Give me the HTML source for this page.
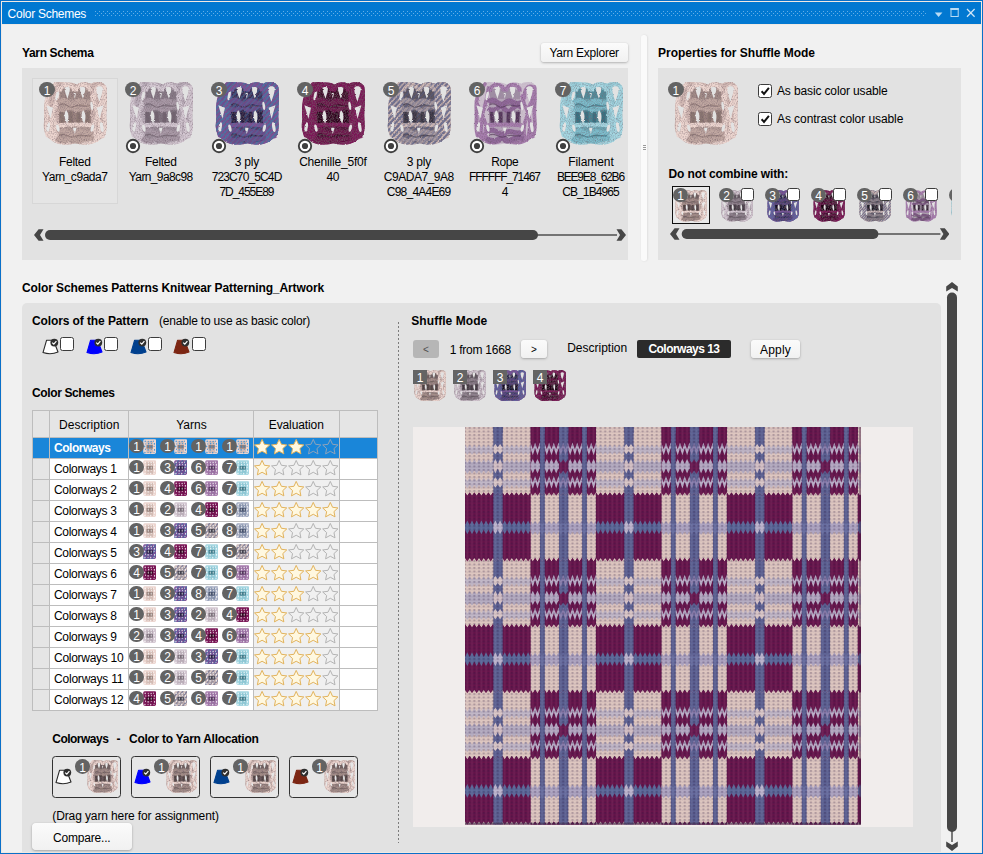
<!DOCTYPE html>
<html><head><meta charset="utf-8"><title>Color Schemes</title>
<style>
html,body{margin:0;padding:0;}
body{width:983px;height:854px;overflow:hidden;position:relative;background:#f1f1f1;
 font-family:"Liberation Sans",sans-serif;font-size:12px;}
.b{position:absolute;display:block;}
.t{position:absolute;white-space:nowrap;line-height:16px;height:16px;}
</style></head><body>
<div class="b " style="left:0px;top:0px;width:983px;height:854px;background:#0a70c9;"></div>
<div class="b " style="left:1px;top:1px;width:981px;height:852px;background:#f1e9e2;"></div>
<div class="b " style="left:2px;top:2px;width:979px;height:22px;background:#0178d1;"></div>
<div class="b " style="left:2px;top:24px;width:979px;height:1px;background:#f0e9e3;"></div>
<div class="b " style="left:2px;top:25px;width:979px;height:827px;background:#f1f1f1;"></div>
<span class="t" style="left:7.60px;top:6.00px;font-size:12px;color:#fff;letter-spacing:-0.272px;">Color Schemes</span>
<svg class="b" style="left:94px;top:11px" width="834" height="5"><defs><pattern id="grip" width="4" height="4" patternUnits="userSpaceOnUse"><rect x="1" y="0" width="1" height="1" fill="#63aee6"/><rect x="3" y="2" width="1" height="1" fill="#63aee6"/></pattern></defs><rect width="832" height="5" fill="url(#grip)"/></svg>
<svg class="b" style="left:934px;top:11px" width="10" height="8"><path d="M0.8 1.6h7.6l-3.8 4.4z" fill="#b9dbf4"/></svg>
<svg class="b" style="left:950px;top:7px" width="10" height="11"><rect x="1" y="1.5" width="7.2" height="8" fill="none" stroke="#b9dbf4" stroke-width="1"/><rect x="0.5" y="1" width="8.2" height="2" fill="#b9dbf4"/></svg>
<svg class="b" style="left:966px;top:8px" width="10" height="10"><path d="M1 1l7.6 7.8M8.6 1L1 8.8" stroke="#cfe5f7" stroke-width="1.25" fill="none"/></svg>
<svg width="0" height="0" style="position:absolute">
<defs>
<filter id="fz" x="-6%" y="-6%" width="112%" height="112%">
  <feTurbulence type="fractalNoise" baseFrequency="0.7" numOctaves="2" seed="4" result="n"/>
  <feDisplacementMap in="SourceGraphic" in2="n" scale="2.2" xChannelSelector="R" yChannelSelector="G"/>
  <feGaussianBlur stdDeviation="0.3" result="g"/>
  <feTurbulence type="fractalNoise" baseFrequency="0.85" numOctaves="2" seed="9" result="sp"/>
  <feColorMatrix in="sp" type="matrix" values="0 0 0 0 0.16  0 0 0 0 0.10  0 0 0 0 0.14  1.5 0 0 0 -0.62" result="spk"/>
  <feComposite in="spk" in2="g" operator="atop"/>
</filter>
<clipPath id="ysil"><path id="ysilp" d="M2 20 C4 10 8 4 12 0.5 C16 -1 21 1 25 0.5 C29 0 32 2 34 2.5 C37 0 44 -0.5 48 2 C52 -1 62 -1 63.5 6 C65 18 62.5 30 63.5 42 C64 50 62 55 57 58 C50 64 40 64 33 61.5 C25 64 14 64 8 58 C2 55 0 48 1 40 C2 32 0 26 2 20 Z"/></clipPath>
<mask id="yholes" maskUnits="userSpaceOnUse" x="-4" y="-4" width="72" height="72"><rect x="-4" y="-4" width="72" height="72" fill="#fff"/><g fill="#000">
   <path d="M21.6 6.5 C22.5 4.6 26 4.6 26.9 6.5 C27 10 25.4 13 24.5 17 C23.3 13 21.6 10 21.6 6.5Z"/>
   <path d="M37 6.5 C37.9 4.6 41.4 4.6 42.3 6.5 C42.4 10 40.8 13 39.9 17 C38.7 13 37 10 37 6.5Z"/>
   <path d="M30.6 11 L33 11 L31.8 17Z"/>
   <path d="M53.2 6 C54.2 3.8 58.8 3.8 59.8 6 C59.8 11 57.8 15 56.4 20 C54.8 15 53.2 11 53.2 6Z"/>
   <path d="M23.2 28.5 C26.2 32 25.8 37 24.2 42 C21.4 37 20.6 32 23.2 28.5Z"/>
   <path d="M40.2 28.5 C43.2 32 42.8 37 41.2 42 C38.4 37 37.6 32 40.2 28.5Z"/>
   <path d="M30 46 L33.6 46 L31.8 52.5Z"/>
   <path d="M3.4 23.5 L10 26 L7.4 37Z"/>
   <ellipse cx="5.2" cy="45.5" rx="1.6" ry="5" transform="rotate(10 5.2 45.5)"/>
   <ellipse cx="14.4" cy="14" rx="1.4" ry="4.6" transform="rotate(12 14.6 13)"/>
   <ellipse cx="14.8" cy="46.5" rx="1.5" ry="3.8" transform="rotate(-12 14.8 46)"/>
   <path d="M53.6 26 L60.4 23.5 L56.6 37Z"/>
   <ellipse cx="58.8" cy="45.5" rx="1.6" ry="5" transform="rotate(-10 58.8 45.5)"/>
   <ellipse cx="49" cy="24" rx="1.3" ry="4.2" transform="rotate(-8 48.8 25.5)"/>
   <ellipse cx="49.4" cy="46.5" rx="1.5" ry="3.8" transform="rotate(12 49.4 46)"/>
  </g></mask>
<symbol id="yarn" viewBox="0 0 64 64">
 <g filter="url(#fz)"><g mask="url(#yholes)">
  <use href="#ysilp" fill="var(--l)" style="opacity:var(--bo,1)"/>
  <use href="#ysilp" fill="var(--m)" style="opacity:calc(var(--bo,1)*.62)"/>
  <!-- light strands at the sides -->
  <g stroke="var(--l)" stroke-width="3.7" fill="none" stroke-linecap="round">
   <path d="M12 2 C6 8 2.5 16 3.5 26 C4.5 36 2.5 46 4.5 54"/>
   <path d="M4 22 C8 30 13 38 13 48 C13 54 12 57 14 59"/>
   <path d="M15.5 6 C14.5 16 12 24 9.5 32 C7.5 40 8 50 10.5 57"/>
   <path d="M61.5 5 C62.5 16 60.5 26 61.5 36 C62.5 46 61.5 52 59.5 55"/>
   <path d="M60.5 22 C56 30 51 38 51 48 C51 54 52 57 50 59"/>
   <path d="M49.5 14 C49.5 20 53 26 55.5 32 C57.5 40 57 50 54.5 57"/>
   <path d="M51.5 16 C50 2 63.5 0.5 61 12 C60 18 58 22 56 25"/>
   <path d="M6 52 C9 60 18 63 26 60 M38 60 C46 63 55 60 58 52"/>
  </g>
  <path d="M-70.0 70 L0.0 -6 M-64.8 70 L5.2 -6 M-59.6 70 L10.4 -6 M-54.4 70 L15.6 -6 M-49.2 70 L20.8 -6 M-44.0 70 L26.0 -6 M-38.8 70 L31.2 -6 M-33.6 70 L36.4 -6 M-28.4 70 L41.6 -6 M-23.2 70 L46.8 -6 M-18.0 70 L52.0 -6 M-12.8 70 L57.2 -6 M-7.6 70 L62.4 -6 M-2.4 70 L67.6 -6 M2.8 70 L72.8 -6 M8.0 70 L78.0 -6 M13.2 70 L83.2 -6 M18.4 70 L88.4 -6 M23.6 70 L93.6 -6 M28.8 70 L98.8 -6 M34.0 70 L104.0 -6 M39.2 70 L109.2 -6 M44.4 70 L114.4 -6 M49.6 70 L119.6 -6 M54.8 70 L124.8 -6 M60.0 70 L130.0 -6 M65.2 70 L135.2 -6 M70.4 70 L140.4 -6 " stroke="var(--a)" stroke-width="2.1" fill="none" clip-path="url(#ysil)" opacity=".8"/>
  <!-- centre dark block -->
  <path d="M16.5 9 C20 6 28 6 32 8 C36 6 44 6 47.5 9 L48 59 C42 62 22 62 16 59 Z" fill="var(--d)" style="opacity:calc(var(--co,1)*.42)"/>
  <rect x="16" y="28.5" width="32" height="13.5" fill="var(--d)" style="opacity:calc(var(--co,1)*.6)"/>
  <rect x="17" y="6.5" width="30" height="10.5" fill="var(--d)" style="opacity:calc(var(--co,1)*.45)"/>
  <!-- top loop arcs (light) -->
  <path d="M17 9.5 C17 0.5 31 0.5 31 9.5 M33 9.5 C33 0.5 47 0.5 47 9.5" stroke="var(--l)" stroke-width="4" fill="none"/>
  <!-- wavy band 1 -->
  <path d="M15 20.5 Q19.5 16.5 24 20.5 T32 21 T40 20.5 T49 20.5" stroke="var(--m)" stroke-width="5.4" fill="none"/>
  <path d="M15 26.5 Q19.5 30 24 26.5 T32 27.5 T40 26.5 T49 26.5" stroke="var(--m)" stroke-width="4.8" fill="none"/>
  <path d="M16 23.4 Q20 20.6 24 23.6 T32 24.4 T40 23.6 T48 23.4" stroke="var(--d)" stroke-width="1.2" fill="none" opacity=".65"/>
  <!-- light band -->
  <path d="M14 44 Q32 41.5 50 44" stroke="var(--l)" stroke-width="4.2" fill="none"/>
  <!-- wavy band 2 -->
  <path d="M14 50.5 Q19 46.8 24 50.5 T32 51.5 T40 50.5 T50 50.5" stroke="var(--m)" stroke-width="5" fill="none"/>
  <path d="M13 57 Q19 61 25 58 T32 58 T39 58 T51 57" stroke="var(--m)" stroke-width="5.4" fill="none"/>
  <path d="M16 54 Q20 51.4 24 54 T32 55 T40 54 T48 54" stroke="var(--d)" stroke-width="1.2" fill="none" opacity=".65"/>
  <path d="M-70.0 70 L0.0 -6 M-64.8 70 L5.2 -6 M-59.6 70 L10.4 -6 M-54.4 70 L15.6 -6 M-49.2 70 L20.8 -6 M-44.0 70 L26.0 -6 M-38.8 70 L31.2 -6 M-33.6 70 L36.4 -6 M-28.4 70 L41.6 -6 M-23.2 70 L46.8 -6 M-18.0 70 L52.0 -6 M-12.8 70 L57.2 -6 M-7.6 70 L62.4 -6 M-2.4 70 L67.6 -6 M2.8 70 L72.8 -6 M8.0 70 L78.0 -6 M13.2 70 L83.2 -6 M18.4 70 L88.4 -6 M23.6 70 L93.6 -6 M28.8 70 L98.8 -6 M34.0 70 L104.0 -6 M39.2 70 L109.2 -6 M44.4 70 L114.4 -6 M49.6 70 L119.6 -6 M54.8 70 L124.8 -6 M60.0 70 L130.0 -6 M65.2 70 L135.2 -6 M70.4 70 L140.4 -6 " stroke="var(--a)" stroke-width="1.6" fill="none" clip-path="url(#ysil)" opacity=".45"/>
  <!-- dark legs accents -->
  <path d="M18.5 30 L19.3 41 M27.6 30 L28 41 M35.6 30 L35.2 41 M45 30 L44.4 41" stroke="var(--d)" stroke-width="3.6" fill="none" opacity=".9"/>
 </g></g>
</symbol>
<mask id="minih" maskUnits="userSpaceOnUse" x="0" y="0" width="64" height="64"><rect width="64" height="64" fill="#fff"/><g fill="#000"><ellipse cx="10.4" cy="9.8" rx="2.6" ry="3.6"/><ellipse cx="24.9" cy="10.4" rx="2.0" ry="2.8"/><ellipse cx="38.8" cy="10.4" rx="2.6" ry="3.6"/><ellipse cx="50.5" cy="8.9" rx="2.0" ry="2.8"/><ellipse cx="13.4" cy="20.5" rx="2.0" ry="2.8"/><ellipse cx="27.3" cy="18.8" rx="2.6" ry="3.6"/><ellipse cx="39.9" cy="19.2" rx="2.0" ry="2.8"/><ellipse cx="54.1" cy="20.2" rx="2.6" ry="3.6"/><ellipse cx="8.4" cy="31.1" rx="2.6" ry="3.6"/><ellipse cx="25" cy="32" rx="2" ry="4.6"/><ellipse cx="39" cy="32" rx="2" ry="4.6"/><ellipse cx="53.0" cy="30.8" rx="2.0" ry="2.8"/><ellipse cx="12.4" cy="42.8" rx="2.0" ry="2.8"/><ellipse cx="24.4" cy="45.2" rx="2.6" ry="3.6"/><ellipse cx="39.1" cy="43.1" rx="2.0" ry="2.8"/><ellipse cx="55.5" cy="45.2" rx="2.6" ry="3.6"/><ellipse cx="9.3" cy="56.5" rx="2.6" ry="3.6"/><ellipse cx="24.1" cy="55.6" rx="2.0" ry="2.8"/><ellipse cx="37.1" cy="56.4" rx="2.6" ry="3.6"/><ellipse cx="52.6" cy="56.5" rx="2.0" ry="2.8"/></g></mask>
<symbol id="ymini" viewBox="0 0 64 64">
 <g mask="url(#minih)">
  <path d="M8 1 H58 Q63 1 63 6 V52 Q63 63 50 63 H14 Q1 63 1 52 V8 Q1 1 8 1Z" fill="var(--l)"/>
  <path d="M0 64 L64 0 M-20 64 L44 0 M20 64 L84 0 M-40 64 L24 0 M40 64 L104 0" stroke="var(--a)" stroke-width="7" opacity=".7"/>
  <rect x="16" y="8" width="32" height="50" fill="var(--m)" opacity=".55"/>
  <rect x="17" y="25" width="30" height="15" fill="var(--d)" opacity=".85"/>
 </g>
</symbol>
</defs></svg>
<span class="t" style="left:22.00px;top:45.30px;font-size:12px;color:#000;font-weight:bold;letter-spacing:-0.352px;">Yarn Schema</span>
<div class="b " style="left:540.5px;top:43px;width:87.5px;height:18.5px;background:#f7f7f7;border-radius:3px;box-shadow:0 1px 2.5px rgba(0,0,0,.26),0 0 1px rgba(0,0,0,.14);background:linear-gradient(#fbfbfb,#f1f1f1);"></div>
<span class="t" style="left:549.39px;top:45.35px;font-size:12px;color:#000;letter-spacing:-0.229px;">Yarn Explorer</span>
<div class="b " style="left:22px;top:68px;width:606px;height:191.5px;background:#e2e2e2;"></div>
<div class="b " style="left:32px;top:78px;width:86px;height:125.6px;background:#e5e5e5;border:1px solid #d7d7d7;box-sizing:border-box;"></div>
<svg class="b" style="left:43px;top:82px;--l:#ecd5cf;--m:#c0a7a1;--d:#8a7570;--a:none;--bo:1;--co:1;" width="64" height="63.5" viewBox="0 0 64 64" preserveAspectRatio="none"><use href="#yarn"/></svg>
<div class="b " style="left:39.3px;top:82.0px;width:15.4px;height:15.4px;background:#636363;border-radius:50%;"></div>
<span class="t" style="left:43.66px;top:82.90px;font-size:12px;color:#fff;">1</span>
<span class="t" style="left:59.10px;top:153.60px;font-size:12px;color:#000;letter-spacing:-0.309px;">Felted</span>
<span class="t" style="left:42.02px;top:168.60px;font-size:12px;color:#000;letter-spacing:-0.455px;">Yarn_c9ada7</span>
<svg class="b" style="left:129px;top:82px;--l:#d3c7d1;--m:#a899a6;--d:#70646f;--a:none;--bo:1;--co:1;" width="64" height="63.5" viewBox="0 0 64 64" preserveAspectRatio="none"><use href="#yarn"/></svg>
<div class="b " style="left:125.3px;top:82.0px;width:15.4px;height:15.4px;background:#636363;border-radius:50%;"></div>
<span class="t" style="left:129.66px;top:82.90px;font-size:12px;color:#fff;">2</span>
<svg class="b" style="left:125px;top:137.8px" width="16" height="16"><circle cx="8" cy="8" r="6.2" fill="#fff" stroke="#404040" stroke-width="1.9"/><circle cx="8" cy="8" r="3.1" fill="#404040"/></svg>
<span class="t" style="left:145.10px;top:153.60px;font-size:12px;color:#000;letter-spacing:-0.309px;">Felted</span>
<span class="t" style="left:128.84px;top:168.60px;font-size:12px;color:#000;letter-spacing:-0.618px;">Yarn_9a8c98</span>
<svg class="b" style="left:215px;top:82px;--l:#7d4f96;--m:#684a8c;--d:#221a3c;--a:#4a74a6;--bo:1;--co:1;" width="64" height="63.5" viewBox="0 0 64 64" preserveAspectRatio="none"><use href="#yarn"/></svg>
<div class="b " style="left:211.3px;top:82.0px;width:15.4px;height:15.4px;background:#636363;border-radius:50%;"></div>
<span class="t" style="left:215.66px;top:82.90px;font-size:12px;color:#fff;">3</span>
<svg class="b" style="left:211px;top:137.8px" width="16" height="16"><circle cx="8" cy="8" r="6.2" fill="#fff" stroke="#404040" stroke-width="1.9"/><circle cx="8" cy="8" r="3.1" fill="#404040"/></svg>
<span class="t" style="left:234.71px;top:153.60px;font-size:12px;color:#000;letter-spacing:-0.190px;">3 ply</span>
<span class="t" style="left:211.66px;top:168.60px;font-size:12px;color:#000;letter-spacing:-0.872px;">723C70_5C4D</span>
<span class="t" style="left:219.48px;top:183.60px;font-size:12px;color:#000;letter-spacing:-1.043px;">7D_455E89</span>
<svg class="b" style="left:301px;top:82px;--l:#7c1858;--m:#6c124c;--d:#2c041c;--a:none;--bo:1;--co:1;" width="64" height="63.5" viewBox="0 0 64 64" preserveAspectRatio="none"><use href="#yarn"/></svg>
<div class="b " style="left:297.3px;top:82.0px;width:15.4px;height:15.4px;background:#636363;border-radius:50%;"></div>
<span class="t" style="left:301.66px;top:82.90px;font-size:12px;color:#fff;">4</span>
<svg class="b" style="left:297px;top:137.8px" width="16" height="16"><circle cx="8" cy="8" r="6.2" fill="#fff" stroke="#404040" stroke-width="1.9"/><circle cx="8" cy="8" r="3.1" fill="#404040"/></svg>
<span class="t" style="left:299.15px;top:153.60px;font-size:12px;color:#000;letter-spacing:-0.196px;">Chenille_5f0f</span>
<span class="t" style="left:326.46px;top:168.60px;font-size:12px;color:#000;letter-spacing:-0.274px;">40</span>
<svg class="b" style="left:387px;top:82px;--l:#d0bcb8;--m:#a99ca2;--d:#33333f;--a:#676c90;--bo:1;--co:1;" width="64" height="63.5" viewBox="0 0 64 64" preserveAspectRatio="none"><use href="#yarn"/></svg>
<div class="b " style="left:383.3px;top:82.0px;width:15.4px;height:15.4px;background:#636363;border-radius:50%;"></div>
<span class="t" style="left:387.66px;top:82.90px;font-size:12px;color:#fff;">5</span>
<svg class="b" style="left:383px;top:137.8px" width="16" height="16"><circle cx="8" cy="8" r="6.2" fill="#fff" stroke="#404040" stroke-width="1.9"/><circle cx="8" cy="8" r="3.1" fill="#404040"/></svg>
<span class="t" style="left:406.71px;top:153.60px;font-size:12px;color:#000;letter-spacing:-0.190px;">3 ply</span>
<span class="t" style="left:383.85px;top:168.60px;font-size:12px;color:#000;letter-spacing:-0.491px;">C9ADA7_9A8</span>
<span class="t" style="left:386.86px;top:183.60px;font-size:12px;color:#000;letter-spacing:-0.789px;">C98_4A4E69</span>
<svg class="b" style="left:473px;top:82px;--l:#a67dad;--m:#90689a;--d:#4a2c54;--a:none;--bo:.22;--co:.45;" width="64" height="63.5" viewBox="0 0 64 64" preserveAspectRatio="none"><use href="#yarn"/></svg>
<div class="b " style="left:469.3px;top:82.0px;width:15.4px;height:15.4px;background:#636363;border-radius:50%;"></div>
<span class="t" style="left:473.66px;top:82.90px;font-size:12px;color:#fff;">6</span>
<svg class="b" style="left:469px;top:137.8px" width="16" height="16"><circle cx="8" cy="8" r="6.2" fill="#fff" stroke="#404040" stroke-width="1.9"/><circle cx="8" cy="8" r="3.1" fill="#404040"/></svg>
<span class="t" style="left:491.29px;top:153.60px;font-size:12px;color:#000;letter-spacing:-0.422px;">Rope</span>
<span class="t" style="left:468.96px;top:168.60px;font-size:12px;color:#000;letter-spacing:-1.085px;">FFFFFF_71467</span>
<span class="t" style="left:501.66px;top:183.60px;font-size:12px;color:#000;">4</span>
<svg class="b" style="left:559px;top:82px;--l:#a4d6e1;--m:#7cbccb;--d:#336f7e;--a:none;--bo:.8;--co:1;" width="64" height="63.5" viewBox="0 0 64 64" preserveAspectRatio="none"><use href="#yarn"/></svg>
<div class="b " style="left:555.3px;top:82.0px;width:15.4px;height:15.4px;background:#636363;border-radius:50%;"></div>
<span class="t" style="left:559.66px;top:82.90px;font-size:12px;color:#fff;">7</span>
<svg class="b" style="left:555px;top:137.8px" width="16" height="16"><circle cx="8" cy="8" r="6.2" fill="#fff" stroke="#404040" stroke-width="1.9"/><circle cx="8" cy="8" r="3.1" fill="#404040"/></svg>
<span class="t" style="left:568.17px;top:153.60px;font-size:12px;color:#000;letter-spacing:-0.052px;">Filament</span>
<span class="t" style="left:556.91px;top:168.60px;font-size:12px;color:#000;letter-spacing:-1.188px;">BEE9E8_62B6</span>
<span class="t" style="left:562.20px;top:183.60px;font-size:12px;color:#000;letter-spacing:-0.891px;">CB_1B4965</span>
<svg class="b" style="left:34px;top:228px" width="592" height="14"><path d="M9.5 1.2 L4.6 1.2 L0 7 L4.6 12.8 L9.5 12.8 L6 7 Z" fill="#464646"/><rect x="11" y="2" width="493" height="10" rx="5" fill="#464646"/><rect x="502" y="6.3" width="81" height="1.4" fill="#464646"/><path d="M582.5 1.2 l4.9 0 l4.6 5.8 l-4.6 5.8 l-4.9 0 l3.5 -5.8 Z" fill="#464646"/></svg>
<div class="b " style="left:641.4px;top:35px;width:6px;height:225.5px;background:#fafafa;box-shadow:0.5px 0 2px rgba(0,0,0,.10);border-radius:2.5px;"></div>
<div class="b " style="left:643.2px;top:145.2px;width:2.6px;height:1px;background:#9a9a9a;"></div>
<div class="b " style="left:643.2px;top:147.2px;width:2.6px;height:1px;background:#9a9a9a;"></div>
<div class="b " style="left:643.2px;top:149.2px;width:2.6px;height:1px;background:#9a9a9a;"></div>
<span class="t" style="left:658.00px;top:45.30px;font-size:12px;color:#000;font-weight:bold;letter-spacing:-0.013px;">Properties for Shuffle Mode</span>
<div class="b " style="left:658px;top:68px;width:303px;height:191.5px;background:#e2e2e2;"></div>
<svg class="b" style="left:674px;top:82px;--l:#ecd5cf;--m:#c0a7a1;--d:#8a7570;--a:none;--bo:1;--co:1;" width="64" height="63.5" viewBox="0 0 64 64" preserveAspectRatio="none"><use href="#yarn"/></svg>
<div class="b " style="left:668.1999999999999px;top:82.0px;width:15.4px;height:15.4px;background:#636363;border-radius:50%;"></div>
<span class="t" style="left:672.56px;top:82.90px;font-size:12px;color:#fff;">1</span>
<div class="b " style="left:758px;top:84px;width:12px;height:12px;background:#fff;border:1px solid #3c3c3c;border-radius:2.5px;"><svg width="14" height="14" viewBox="0 0 14 14" style="position:absolute;left:-1px;top:-1px"><path d="M3.6 7.3 L6 9.9 L10.9 3.9" fill="none" stroke="#111" stroke-width="2" stroke-linejoin="miter"/></svg></div>
<div class="b " style="left:758px;top:112px;width:12px;height:12px;background:#fff;border:1px solid #3c3c3c;border-radius:2.5px;"><svg width="14" height="14" viewBox="0 0 14 14" style="position:absolute;left:-1px;top:-1px"><path d="M3.6 7.3 L6 9.9 L10.9 3.9" fill="none" stroke="#111" stroke-width="2" stroke-linejoin="miter"/></svg></div>
<span class="t" style="left:777.00px;top:82.90px;font-size:12px;color:#000;letter-spacing:-0.133px;">As basic color usable</span>
<span class="t" style="left:777.00px;top:110.90px;font-size:12px;color:#000;letter-spacing:-0.073px;">As contrast color usable</span>
<span class="t" style="left:668.50px;top:165.90px;font-size:12px;color:#000;font-weight:bold;letter-spacing:-0.114px;">Do not combine with:</span>
<div class="b " style="left:672px;top:186px;width:38px;height:38px;background:#e9e9e9;border:1px solid #111;box-sizing:border-box;"></div>
<div class="b" style="left:670px;top:184px;width:281.5px;height:42px;overflow:hidden">
<svg class="b" style="left:4.600000000000023px;top:6px;--l:#ecd5cf;--m:#a38d88;--d:#4b403d;--a:none;--bo:1;--co:1;" width="32" height="32" viewBox="0 0 64 64" preserveAspectRatio="none"><use href="#yarn"/></svg>
<div class="b " style="left:3.3px;top:3.600000000000011px;width:14.4px;height:14.4px;background:#636363;border-radius:50%;"></div>
<span class="t" style="left:7.16px;top:4.00px;font-size:12px;color:#fff;">1</span>
<svg class="b" style="left:50.60000000000002px;top:6px;--l:#d3c7d1;--m:#8e828d;--d:#3d373d;--a:none;--bo:1;--co:1;" width="32" height="32" viewBox="0 0 64 64" preserveAspectRatio="none"><use href="#yarn"/></svg>
<div class="b " style="left:49.3px;top:3.600000000000011px;width:14.4px;height:14.4px;background:#636363;border-radius:50%;"></div>
<span class="t" style="left:53.16px;top:4.00px;font-size:12px;color:#fff;">2</span>
<div class="b " style="left:70.79999999999995px;top:3.5999999999999943px;width:11.5px;height:11.5px;background:#fff;border:1px solid #3c3c3c;border-radius:2.5px;"></div>
<svg class="b" style="left:96.60000000000002px;top:6px;--l:#7d4f96;--m:#583e77;--d:#120e21;--a:#4a74a6;--bo:1;--co:1;" width="32" height="32" viewBox="0 0 64 64" preserveAspectRatio="none"><use href="#yarn"/></svg>
<div class="b " style="left:95.3px;top:3.600000000000011px;width:14.4px;height:14.4px;background:#636363;border-radius:50%;"></div>
<span class="t" style="left:99.16px;top:4.00px;font-size:12px;color:#fff;">3</span>
<div class="b " style="left:116.79999999999995px;top:3.5999999999999943px;width:11.5px;height:11.5px;background:#fff;border:1px solid #3c3c3c;border-radius:2.5px;"></div>
<svg class="b" style="left:142.60000000000002px;top:6px;--l:#7c1858;--m:#5b0f40;--d:#18020f;--a:none;--bo:1;--co:1;" width="32" height="32" viewBox="0 0 64 64" preserveAspectRatio="none"><use href="#yarn"/></svg>
<div class="b " style="left:141.3px;top:3.600000000000011px;width:14.4px;height:14.4px;background:#636363;border-radius:50%;"></div>
<span class="t" style="left:145.16px;top:4.00px;font-size:12px;color:#fff;">4</span>
<div class="b " style="left:162.79999999999995px;top:3.5999999999999943px;width:11.5px;height:11.5px;background:#fff;border:1px solid #3c3c3c;border-radius:2.5px;"></div>
<svg class="b" style="left:188.60000000000002px;top:6px;--l:#d0bcb8;--m:#8f8489;--d:#1c1c22;--a:#676c90;--bo:1;--co:1;" width="32" height="32" viewBox="0 0 64 64" preserveAspectRatio="none"><use href="#yarn"/></svg>
<div class="b " style="left:187.3px;top:3.600000000000011px;width:14.4px;height:14.4px;background:#636363;border-radius:50%;"></div>
<span class="t" style="left:191.16px;top:4.00px;font-size:12px;color:#fff;">5</span>
<div class="b " style="left:208.79999999999995px;top:3.5999999999999943px;width:11.5px;height:11.5px;background:#fff;border:1px solid #3c3c3c;border-radius:2.5px;"></div>
<svg class="b" style="left:234.60000000000002px;top:6px;--l:#a67dad;--m:#7a5882;--d:#28182e;--a:none;--bo:.22;--co:.45;" width="32" height="32" viewBox="0 0 64 64" preserveAspectRatio="none"><use href="#yarn"/></svg>
<div class="b " style="left:233.3px;top:3.600000000000011px;width:14.4px;height:14.4px;background:#636363;border-radius:50%;"></div>
<span class="t" style="left:237.16px;top:4.00px;font-size:12px;color:#fff;">6</span>
<div class="b " style="left:254.79999999999995px;top:3.5999999999999943px;width:11.5px;height:11.5px;background:#fff;border:1px solid #3c3c3c;border-radius:2.5px;"></div>
<svg class="b" style="left:280.6px;top:6px;--l:#a4d6e1;--m:#699fac;--d:#1c3d45;--a:none;--bo:.8;--co:1;" width="32" height="32" viewBox="0 0 64 64" preserveAspectRatio="none"><use href="#yarn"/></svg>
<div class="b " style="left:279.3px;top:3.600000000000011px;width:14.4px;height:14.4px;background:#636363;border-radius:50%;"></div>
<span class="t" style="left:283.16px;top:4.00px;font-size:12px;color:#fff;">7</span>
<div class="b " style="left:300.79999999999995px;top:3.5999999999999943px;width:11.5px;height:11.5px;background:#fff;border:1px solid #3c3c3c;border-radius:2.5px;"></div>
</div>
<svg class="b" style="left:669.6px;top:227px" width="279.4" height="14"><path d="M9.5 1.2 L4.6 1.2 L0 7 L4.6 12.8 L9.5 12.8 L6 7 Z" fill="#464646"/><rect x="11.699999999999932" y="2" width="196.70000000000005" height="10" rx="5" fill="#464646"/><rect x="206.39999999999998" y="6.3" width="64" height="1.4" fill="#464646"/><path d="M269.9 1.2 l4.9 0 l4.6 5.8 l-4.6 5.8 l-4.9 0 l3.5 -5.8 Z" fill="#464646"/></svg>
<span class="t" style="left:22.00px;top:279.80px;font-size:12px;color:#000;font-weight:bold;letter-spacing:-0.108px;">Color Schemes Patterns Knitwear Patterning_Artwork</span>
<div class="b " style="left:22px;top:303.2px;width:919px;height:549px;background:#e2e2e2;border-radius:5px 5px 0 0;"></div>
<svg class="b" style="left:945px;top:281.5px" width="14" height="569.0"><path d="M1.2 9.5 L1.2 4.6 L7 0 L12.8 4.6 L12.8 9.5 L7 6 Z" fill="#464646"/><rect x="2" y="10.5" width="10" height="539.5" rx="5" fill="#464646"/><rect x="6.3" y="548.0" width="1.4" height="12.0" fill="#464646"/><path d="M1.2 559.5 l0 4.9 l5.8 4.6 l5.8 -4.6 l0 -4.9 l-5.8 3.5 Z" fill="#464646"/></svg>
<span class="t" style="left:32.00px;top:312.80px;font-size:12px;color:#000;font-weight:bold;letter-spacing:-0.104px;">Colors of the Pattern</span>
<span class="t" style="left:159.00px;top:312.80px;font-size:12px;color:#000;letter-spacing:-0.192px;">(enable to use as basic color)</span>
<svg class="b" style="left:41.7px;top:338.0px" width="18.0" height="17.0" viewBox="0 0 18 17"><path d="M4.6 2.2 L11.5 2.2 L16 14 Q9 17.2 1 14.6 Z" fill="#ffffff" stroke="#2a2a2a" stroke-width="1.1" stroke-linejoin="round"/><circle cx="12.3" cy="4.6" r="3.9" fill="#2f2f2f"/><path d="M10.2 4.6 L11.8 6.2 L14.4 3.1" fill="none" stroke="#fff" stroke-width="1.2"/></svg>
<div class="b " style="left:60.3px;top:337px;width:11.8px;height:11.8px;background:#fff;border:1px solid #3c3c3c;border-radius:2.5px;"></div>
<svg class="b" style="left:85.6px;top:338.0px" width="18.0" height="17.0" viewBox="0 0 18 17"><path d="M4.6 2.2 L11.5 2.2 L16 14 Q9 17.2 1 14.6 Z" fill="#0000fe" stroke="#0000fe" stroke-width="1.1" stroke-linejoin="round"/><circle cx="12.3" cy="4.6" r="3.9" fill="#2f2f2f"/><path d="M10.2 4.6 L11.8 6.2 L14.4 3.1" fill="none" stroke="#fff" stroke-width="1.2"/></svg>
<div class="b " style="left:104.19999999999999px;top:337px;width:11.8px;height:11.8px;background:#fff;border:1px solid #3c3c3c;border-radius:2.5px;"></div>
<svg class="b" style="left:129.5px;top:338.0px" width="18.0" height="17.0" viewBox="0 0 18 17"><path d="M4.6 2.2 L11.5 2.2 L16 14 Q9 17.2 1 14.6 Z" fill="#00408e" stroke="#00408e" stroke-width="1.1" stroke-linejoin="round"/><circle cx="12.3" cy="4.6" r="3.9" fill="#2f2f2f"/><path d="M10.2 4.6 L11.8 6.2 L14.4 3.1" fill="none" stroke="#fff" stroke-width="1.2"/></svg>
<div class="b " style="left:148.1px;top:337px;width:11.8px;height:11.8px;background:#fff;border:1px solid #3c3c3c;border-radius:2.5px;"></div>
<svg class="b" style="left:173.4px;top:338.0px" width="18.0" height="17.0" viewBox="0 0 18 17"><path d="M4.6 2.2 L11.5 2.2 L16 14 Q9 17.2 1 14.6 Z" fill="#7c2613" stroke="#7c2613" stroke-width="1.1" stroke-linejoin="round"/><circle cx="12.3" cy="4.6" r="3.9" fill="#2f2f2f"/><path d="M10.2 4.6 L11.8 6.2 L14.4 3.1" fill="none" stroke="#fff" stroke-width="1.2"/></svg>
<div class="b " style="left:192.0px;top:337px;width:11.8px;height:11.8px;background:#fff;border:1px solid #3c3c3c;border-radius:2.5px;"></div>
<span class="t" style="left:32.00px;top:384.80px;font-size:12px;color:#000;font-weight:bold;letter-spacing:-0.374px;">Color Schemes</span>
<div class="b " style="left:32.5px;top:410.5px;width:345.0px;height:300px;background:#fff;"></div>
<div class="b " style="left:32.5px;top:410.5px;width:345.0px;height:27px;background:#e5e5e5;"></div>
<div class="b " style="left:32.5px;top:410.5px;width:17.0px;height:300px;background:#e5e5e5;"></div>
<div class="b " style="left:253.5px;top:437.5px;width:86.0px;height:273px;background:#f0f0f0;"></div>
<div class="b " style="left:32.5px;top:437.5px;width:345.0px;height:21px;background:#1a86d9;"></div>
<span class="t" style="left:59.00px;top:417.30px;font-size:12px;color:#000;letter-spacing:0.043px;">Description</span>
<span class="t" style="left:176.25px;top:417.30px;font-size:12px;color:#000;letter-spacing:0.009px;">Yarns</span>
<span class="t" style="left:268.75px;top:417.30px;font-size:12px;color:#000;letter-spacing:-0.104px;">Evaluation</span>
<svg width="0" height="0" style="position:absolute"><defs><path id="star" d="M8.00 0.40 L10.26 5.29 L15.61 5.93 L11.66 9.59 L12.70 14.87 L8.00 12.25 L3.30 14.87 L4.34 9.59 L0.39 5.93 L5.74 5.29Z"/></defs></svg>
<span class="t" style="left:54.00px;top:439.80px;font-size:12px;color:#fff;font-weight:bold;letter-spacing:-0.465px;">Colorways</span>
<svg class="b" style="left:142.7px;top:439.1px;--l:#ecd5cf;--m:#c0a7a1;--d:#8a7570;--a:none;--bo:1;--co:1;" width="13.4" height="15.4" viewBox="0 0 64 64" preserveAspectRatio="none"><use href="#ymini"/></svg>
<div class="b " style="left:129.45px;top:438.55px;width:14.5px;height:14.5px;background:#636363;border-radius:50%;"></div>
<span class="t" style="left:133.36px;top:439.00px;font-size:12px;color:#fff;">1</span>
<svg class="b" style="left:173.7px;top:439.1px;--l:#ecd5cf;--m:#c0a7a1;--d:#8a7570;--a:none;--bo:1;--co:1;" width="13.4" height="15.4" viewBox="0 0 64 64" preserveAspectRatio="none"><use href="#ymini"/></svg>
<div class="b " style="left:160.45px;top:438.55px;width:14.5px;height:14.5px;background:#636363;border-radius:50%;"></div>
<span class="t" style="left:164.36px;top:439.00px;font-size:12px;color:#fff;">1</span>
<svg class="b" style="left:204.7px;top:439.1px;--l:#ecd5cf;--m:#c0a7a1;--d:#8a7570;--a:none;--bo:1;--co:1;" width="13.4" height="15.4" viewBox="0 0 64 64" preserveAspectRatio="none"><use href="#ymini"/></svg>
<div class="b " style="left:191.45px;top:438.55px;width:14.5px;height:14.5px;background:#636363;border-radius:50%;"></div>
<span class="t" style="left:195.36px;top:439.00px;font-size:12px;color:#fff;">1</span>
<svg class="b" style="left:235.7px;top:439.1px;--l:#ecd5cf;--m:#c0a7a1;--d:#8a7570;--a:none;--bo:1;--co:1;" width="13.4" height="15.4" viewBox="0 0 64 64" preserveAspectRatio="none"><use href="#ymini"/></svg>
<div class="b " style="left:222.45px;top:438.55px;width:14.5px;height:14.5px;background:#636363;border-radius:50%;"></div>
<span class="t" style="left:226.36px;top:439.00px;font-size:12px;color:#fff;">1</span>
<svg class="b" style="left:253.5px;top:437.5px" width="86.0" height="21"><use href="#star" x="0.10" y="1.0" fill="#fff8e0" stroke="#e2b35c" stroke-width="1" stroke-linejoin="round"/><use href="#star" x="17.15" y="1.0" fill="#fff8e0" stroke="#e2b35c" stroke-width="1" stroke-linejoin="round"/><use href="#star" x="34.20" y="1.0" fill="#fff8e0" stroke="#e2b35c" stroke-width="1" stroke-linejoin="round"/><use href="#star" x="51.25" y="1.0" fill="none" stroke="#8fa3ba" stroke-width="1" stroke-linejoin="round"/><use href="#star" x="68.30" y="1.0" fill="none" stroke="#8fa3ba" stroke-width="1" stroke-linejoin="round"/></svg>
<span class="t" style="left:54.00px;top:460.90px;font-size:12px;color:#000;letter-spacing:-0.320px;">Colorways 1</span>
<svg class="b" style="left:142.7px;top:460.1px;--l:#ecd5cf;--m:#c0a7a1;--d:#8a7570;--a:none;--bo:1;--co:1;" width="13.4" height="15.4" viewBox="0 0 64 64" preserveAspectRatio="none"><use href="#ymini"/></svg>
<div class="b " style="left:129.45px;top:459.55px;width:14.5px;height:14.5px;background:#636363;border-radius:50%;"></div>
<span class="t" style="left:133.36px;top:460.00px;font-size:12px;color:#fff;">1</span>
<svg class="b" style="left:173.7px;top:460.1px;--l:#7d4f96;--m:#684a8c;--d:#221a3c;--a:#4a74a6;--bo:1;--co:1;" width="13.4" height="15.4" viewBox="0 0 64 64" preserveAspectRatio="none"><use href="#ymini"/></svg>
<div class="b " style="left:160.45px;top:459.55px;width:14.5px;height:14.5px;background:#636363;border-radius:50%;"></div>
<span class="t" style="left:164.36px;top:460.00px;font-size:12px;color:#fff;">3</span>
<svg class="b" style="left:204.7px;top:460.1px;--l:#a67dad;--m:#90689a;--d:#4a2c54;--a:none;--bo:.22;--co:.45;" width="13.4" height="15.4" viewBox="0 0 64 64" preserveAspectRatio="none"><use href="#ymini"/></svg>
<div class="b " style="left:191.45px;top:459.55px;width:14.5px;height:14.5px;background:#636363;border-radius:50%;"></div>
<span class="t" style="left:195.36px;top:460.00px;font-size:12px;color:#fff;">6</span>
<svg class="b" style="left:235.7px;top:460.1px;--l:#a4d6e1;--m:#7cbccb;--d:#336f7e;--a:none;--bo:.8;--co:1;" width="13.4" height="15.4" viewBox="0 0 64 64" preserveAspectRatio="none"><use href="#ymini"/></svg>
<div class="b " style="left:222.45px;top:459.55px;width:14.5px;height:14.5px;background:#636363;border-radius:50%;"></div>
<span class="t" style="left:226.36px;top:460.00px;font-size:12px;color:#fff;">7</span>
<svg class="b" style="left:253.5px;top:458.5px" width="86.0" height="21"><use href="#star" x="0.10" y="1.0" fill="#fff8e0" stroke="#e2b35c" stroke-width="1" stroke-linejoin="round"/><use href="#star" x="17.15" y="1.0" fill="none" stroke="#b4b4b4" stroke-width="1" stroke-linejoin="round"/><use href="#star" x="34.20" y="1.0" fill="none" stroke="#b4b4b4" stroke-width="1" stroke-linejoin="round"/><use href="#star" x="51.25" y="1.0" fill="none" stroke="#b4b4b4" stroke-width="1" stroke-linejoin="round"/><use href="#star" x="68.30" y="1.0" fill="none" stroke="#b4b4b4" stroke-width="1" stroke-linejoin="round"/></svg>
<span class="t" style="left:54.00px;top:481.90px;font-size:12px;color:#000;letter-spacing:-0.320px;">Colorways 2</span>
<svg class="b" style="left:142.7px;top:481.1px;--l:#ecd5cf;--m:#c0a7a1;--d:#8a7570;--a:none;--bo:1;--co:1;" width="13.4" height="15.4" viewBox="0 0 64 64" preserveAspectRatio="none"><use href="#ymini"/></svg>
<div class="b " style="left:129.45px;top:480.55px;width:14.5px;height:14.5px;background:#636363;border-radius:50%;"></div>
<span class="t" style="left:133.36px;top:481.00px;font-size:12px;color:#fff;">1</span>
<svg class="b" style="left:173.7px;top:481.1px;--l:#7c1858;--m:#6c124c;--d:#2c041c;--a:none;--bo:1;--co:1;" width="13.4" height="15.4" viewBox="0 0 64 64" preserveAspectRatio="none"><use href="#ymini"/></svg>
<div class="b " style="left:160.45px;top:480.55px;width:14.5px;height:14.5px;background:#636363;border-radius:50%;"></div>
<span class="t" style="left:164.36px;top:481.00px;font-size:12px;color:#fff;">4</span>
<svg class="b" style="left:204.7px;top:481.1px;--l:#a67dad;--m:#90689a;--d:#4a2c54;--a:none;--bo:.22;--co:.45;" width="13.4" height="15.4" viewBox="0 0 64 64" preserveAspectRatio="none"><use href="#ymini"/></svg>
<div class="b " style="left:191.45px;top:480.55px;width:14.5px;height:14.5px;background:#636363;border-radius:50%;"></div>
<span class="t" style="left:195.36px;top:481.00px;font-size:12px;color:#fff;">6</span>
<svg class="b" style="left:235.7px;top:481.1px;--l:#a4d6e1;--m:#7cbccb;--d:#336f7e;--a:none;--bo:.8;--co:1;" width="13.4" height="15.4" viewBox="0 0 64 64" preserveAspectRatio="none"><use href="#ymini"/></svg>
<div class="b " style="left:222.45px;top:480.55px;width:14.5px;height:14.5px;background:#636363;border-radius:50%;"></div>
<span class="t" style="left:226.36px;top:481.00px;font-size:12px;color:#fff;">7</span>
<svg class="b" style="left:253.5px;top:479.5px" width="86.0" height="21"><use href="#star" x="0.10" y="1.0" fill="#fff8e0" stroke="#e2b35c" stroke-width="1" stroke-linejoin="round"/><use href="#star" x="17.15" y="1.0" fill="#fff8e0" stroke="#e2b35c" stroke-width="1" stroke-linejoin="round"/><use href="#star" x="34.20" y="1.0" fill="#fff8e0" stroke="#e2b35c" stroke-width="1" stroke-linejoin="round"/><use href="#star" x="51.25" y="1.0" fill="none" stroke="#b4b4b4" stroke-width="1" stroke-linejoin="round"/><use href="#star" x="68.30" y="1.0" fill="none" stroke="#b4b4b4" stroke-width="1" stroke-linejoin="round"/></svg>
<span class="t" style="left:54.00px;top:502.90px;font-size:12px;color:#000;letter-spacing:-0.320px;">Colorways 3</span>
<svg class="b" style="left:142.7px;top:502.1px;--l:#ecd5cf;--m:#c0a7a1;--d:#8a7570;--a:none;--bo:1;--co:1;" width="13.4" height="15.4" viewBox="0 0 64 64" preserveAspectRatio="none"><use href="#ymini"/></svg>
<div class="b " style="left:129.45px;top:501.55px;width:14.5px;height:14.5px;background:#636363;border-radius:50%;"></div>
<span class="t" style="left:133.36px;top:502.00px;font-size:12px;color:#fff;">1</span>
<svg class="b" style="left:173.7px;top:502.1px;--l:#d3c7d1;--m:#a899a6;--d:#70646f;--a:none;--bo:1;--co:1;" width="13.4" height="15.4" viewBox="0 0 64 64" preserveAspectRatio="none"><use href="#ymini"/></svg>
<div class="b " style="left:160.45px;top:501.55px;width:14.5px;height:14.5px;background:#636363;border-radius:50%;"></div>
<span class="t" style="left:164.36px;top:502.00px;font-size:12px;color:#fff;">2</span>
<svg class="b" style="left:204.7px;top:502.1px;--l:#7c1858;--m:#6c124c;--d:#2c041c;--a:none;--bo:1;--co:1;" width="13.4" height="15.4" viewBox="0 0 64 64" preserveAspectRatio="none"><use href="#ymini"/></svg>
<div class="b " style="left:191.45px;top:501.55px;width:14.5px;height:14.5px;background:#636363;border-radius:50%;"></div>
<span class="t" style="left:195.36px;top:502.00px;font-size:12px;color:#fff;">4</span>
<svg class="b" style="left:235.7px;top:502.1px;--l:#9aa5bd;--m:#6f7d9b;--d:#3a4560;--a:#c9c9d6;--bo:1;--co:1;" width="13.4" height="15.4" viewBox="0 0 64 64" preserveAspectRatio="none"><use href="#ymini"/></svg>
<div class="b " style="left:222.45px;top:501.55px;width:14.5px;height:14.5px;background:#636363;border-radius:50%;"></div>
<span class="t" style="left:226.36px;top:502.00px;font-size:12px;color:#fff;">8</span>
<svg class="b" style="left:253.5px;top:500.5px" width="86.0" height="21"><use href="#star" x="0.10" y="1.0" fill="#fff8e0" stroke="#e2b35c" stroke-width="1" stroke-linejoin="round"/><use href="#star" x="17.15" y="1.0" fill="#fff8e0" stroke="#e2b35c" stroke-width="1" stroke-linejoin="round"/><use href="#star" x="34.20" y="1.0" fill="#fff8e0" stroke="#e2b35c" stroke-width="1" stroke-linejoin="round"/><use href="#star" x="51.25" y="1.0" fill="#fff8e0" stroke="#e2b35c" stroke-width="1" stroke-linejoin="round"/><use href="#star" x="68.30" y="1.0" fill="#fff8e0" stroke="#e2b35c" stroke-width="1" stroke-linejoin="round"/></svg>
<span class="t" style="left:54.00px;top:523.90px;font-size:12px;color:#000;letter-spacing:-0.320px;">Colorways 4</span>
<svg class="b" style="left:142.7px;top:523.1px;--l:#ecd5cf;--m:#c0a7a1;--d:#8a7570;--a:none;--bo:1;--co:1;" width="13.4" height="15.4" viewBox="0 0 64 64" preserveAspectRatio="none"><use href="#ymini"/></svg>
<div class="b " style="left:129.45px;top:522.55px;width:14.5px;height:14.5px;background:#636363;border-radius:50%;"></div>
<span class="t" style="left:133.36px;top:523.00px;font-size:12px;color:#fff;">1</span>
<svg class="b" style="left:173.7px;top:523.1px;--l:#7d4f96;--m:#684a8c;--d:#221a3c;--a:#4a74a6;--bo:1;--co:1;" width="13.4" height="15.4" viewBox="0 0 64 64" preserveAspectRatio="none"><use href="#ymini"/></svg>
<div class="b " style="left:160.45px;top:522.55px;width:14.5px;height:14.5px;background:#636363;border-radius:50%;"></div>
<span class="t" style="left:164.36px;top:523.00px;font-size:12px;color:#fff;">3</span>
<svg class="b" style="left:204.7px;top:523.1px;--l:#d0bcb8;--m:#a99ca2;--d:#33333f;--a:#676c90;--bo:1;--co:1;" width="13.4" height="15.4" viewBox="0 0 64 64" preserveAspectRatio="none"><use href="#ymini"/></svg>
<div class="b " style="left:191.45px;top:522.55px;width:14.5px;height:14.5px;background:#636363;border-radius:50%;"></div>
<span class="t" style="left:195.36px;top:523.00px;font-size:12px;color:#fff;">5</span>
<svg class="b" style="left:235.7px;top:523.1px;--l:#9aa5bd;--m:#6f7d9b;--d:#3a4560;--a:#c9c9d6;--bo:1;--co:1;" width="13.4" height="15.4" viewBox="0 0 64 64" preserveAspectRatio="none"><use href="#ymini"/></svg>
<div class="b " style="left:222.45px;top:522.55px;width:14.5px;height:14.5px;background:#636363;border-radius:50%;"></div>
<span class="t" style="left:226.36px;top:523.00px;font-size:12px;color:#fff;">8</span>
<svg class="b" style="left:253.5px;top:521.5px" width="86.0" height="21"><use href="#star" x="0.10" y="1.0" fill="#fff8e0" stroke="#e2b35c" stroke-width="1" stroke-linejoin="round"/><use href="#star" x="17.15" y="1.0" fill="#fff8e0" stroke="#e2b35c" stroke-width="1" stroke-linejoin="round"/><use href="#star" x="34.20" y="1.0" fill="none" stroke="#b4b4b4" stroke-width="1" stroke-linejoin="round"/><use href="#star" x="51.25" y="1.0" fill="none" stroke="#b4b4b4" stroke-width="1" stroke-linejoin="round"/><use href="#star" x="68.30" y="1.0" fill="none" stroke="#b4b4b4" stroke-width="1" stroke-linejoin="round"/></svg>
<span class="t" style="left:54.00px;top:544.90px;font-size:12px;color:#000;letter-spacing:-0.320px;">Colorways 5</span>
<svg class="b" style="left:142.7px;top:544.1px;--l:#7d4f96;--m:#684a8c;--d:#221a3c;--a:#4a74a6;--bo:1;--co:1;" width="13.4" height="15.4" viewBox="0 0 64 64" preserveAspectRatio="none"><use href="#ymini"/></svg>
<div class="b " style="left:129.45px;top:543.55px;width:14.5px;height:14.5px;background:#636363;border-radius:50%;"></div>
<span class="t" style="left:133.36px;top:544.00px;font-size:12px;color:#fff;">3</span>
<svg class="b" style="left:173.7px;top:544.1px;--l:#7c1858;--m:#6c124c;--d:#2c041c;--a:none;--bo:1;--co:1;" width="13.4" height="15.4" viewBox="0 0 64 64" preserveAspectRatio="none"><use href="#ymini"/></svg>
<div class="b " style="left:160.45px;top:543.55px;width:14.5px;height:14.5px;background:#636363;border-radius:50%;"></div>
<span class="t" style="left:164.36px;top:544.00px;font-size:12px;color:#fff;">4</span>
<svg class="b" style="left:204.7px;top:544.1px;--l:#a4d6e1;--m:#7cbccb;--d:#336f7e;--a:none;--bo:.8;--co:1;" width="13.4" height="15.4" viewBox="0 0 64 64" preserveAspectRatio="none"><use href="#ymini"/></svg>
<div class="b " style="left:191.45px;top:543.55px;width:14.5px;height:14.5px;background:#636363;border-radius:50%;"></div>
<span class="t" style="left:195.36px;top:544.00px;font-size:12px;color:#fff;">7</span>
<svg class="b" style="left:235.7px;top:544.1px;--l:#d0bcb8;--m:#a99ca2;--d:#33333f;--a:#676c90;--bo:1;--co:1;" width="13.4" height="15.4" viewBox="0 0 64 64" preserveAspectRatio="none"><use href="#ymini"/></svg>
<div class="b " style="left:222.45px;top:543.55px;width:14.5px;height:14.5px;background:#636363;border-radius:50%;"></div>
<span class="t" style="left:226.36px;top:544.00px;font-size:12px;color:#fff;">5</span>
<svg class="b" style="left:253.5px;top:542.5px" width="86.0" height="21"><use href="#star" x="0.10" y="1.0" fill="#fff8e0" stroke="#e2b35c" stroke-width="1" stroke-linejoin="round"/><use href="#star" x="17.15" y="1.0" fill="#fff8e0" stroke="#e2b35c" stroke-width="1" stroke-linejoin="round"/><use href="#star" x="34.20" y="1.0" fill="none" stroke="#b4b4b4" stroke-width="1" stroke-linejoin="round"/><use href="#star" x="51.25" y="1.0" fill="none" stroke="#b4b4b4" stroke-width="1" stroke-linejoin="round"/><use href="#star" x="68.30" y="1.0" fill="none" stroke="#b4b4b4" stroke-width="1" stroke-linejoin="round"/></svg>
<span class="t" style="left:54.00px;top:565.90px;font-size:12px;color:#000;letter-spacing:-0.320px;">Colorways 6</span>
<svg class="b" style="left:142.7px;top:565.1px;--l:#7c1858;--m:#6c124c;--d:#2c041c;--a:none;--bo:1;--co:1;" width="13.4" height="15.4" viewBox="0 0 64 64" preserveAspectRatio="none"><use href="#ymini"/></svg>
<div class="b " style="left:129.45px;top:564.55px;width:14.5px;height:14.5px;background:#636363;border-radius:50%;"></div>
<span class="t" style="left:133.36px;top:565.00px;font-size:12px;color:#fff;">4</span>
<svg class="b" style="left:173.7px;top:565.1px;--l:#d0bcb8;--m:#a99ca2;--d:#33333f;--a:#676c90;--bo:1;--co:1;" width="13.4" height="15.4" viewBox="0 0 64 64" preserveAspectRatio="none"><use href="#ymini"/></svg>
<div class="b " style="left:160.45px;top:564.55px;width:14.5px;height:14.5px;background:#636363;border-radius:50%;"></div>
<span class="t" style="left:164.36px;top:565.00px;font-size:12px;color:#fff;">5</span>
<svg class="b" style="left:204.7px;top:565.1px;--l:#a4d6e1;--m:#7cbccb;--d:#336f7e;--a:none;--bo:.8;--co:1;" width="13.4" height="15.4" viewBox="0 0 64 64" preserveAspectRatio="none"><use href="#ymini"/></svg>
<div class="b " style="left:191.45px;top:564.55px;width:14.5px;height:14.5px;background:#636363;border-radius:50%;"></div>
<span class="t" style="left:195.36px;top:565.00px;font-size:12px;color:#fff;">7</span>
<svg class="b" style="left:235.7px;top:565.1px;--l:#a67dad;--m:#90689a;--d:#4a2c54;--a:none;--bo:.22;--co:.45;" width="13.4" height="15.4" viewBox="0 0 64 64" preserveAspectRatio="none"><use href="#ymini"/></svg>
<div class="b " style="left:222.45px;top:564.55px;width:14.5px;height:14.5px;background:#636363;border-radius:50%;"></div>
<span class="t" style="left:226.36px;top:565.00px;font-size:12px;color:#fff;">6</span>
<svg class="b" style="left:253.5px;top:563.5px" width="86.0" height="21"><use href="#star" x="0.10" y="1.0" fill="#fff8e0" stroke="#e2b35c" stroke-width="1" stroke-linejoin="round"/><use href="#star" x="17.15" y="1.0" fill="#fff8e0" stroke="#e2b35c" stroke-width="1" stroke-linejoin="round"/><use href="#star" x="34.20" y="1.0" fill="#fff8e0" stroke="#e2b35c" stroke-width="1" stroke-linejoin="round"/><use href="#star" x="51.25" y="1.0" fill="#fff8e0" stroke="#e2b35c" stroke-width="1" stroke-linejoin="round"/><use href="#star" x="68.30" y="1.0" fill="none" stroke="#b4b4b4" stroke-width="1" stroke-linejoin="round"/></svg>
<span class="t" style="left:54.00px;top:586.90px;font-size:12px;color:#000;letter-spacing:-0.320px;">Colorways 7</span>
<svg class="b" style="left:142.7px;top:586.1px;--l:#ecd5cf;--m:#c0a7a1;--d:#8a7570;--a:none;--bo:1;--co:1;" width="13.4" height="15.4" viewBox="0 0 64 64" preserveAspectRatio="none"><use href="#ymini"/></svg>
<div class="b " style="left:129.45px;top:585.55px;width:14.5px;height:14.5px;background:#636363;border-radius:50%;"></div>
<span class="t" style="left:133.36px;top:586.00px;font-size:12px;color:#fff;">1</span>
<svg class="b" style="left:173.7px;top:586.1px;--l:#7d4f96;--m:#684a8c;--d:#221a3c;--a:#4a74a6;--bo:1;--co:1;" width="13.4" height="15.4" viewBox="0 0 64 64" preserveAspectRatio="none"><use href="#ymini"/></svg>
<div class="b " style="left:160.45px;top:585.55px;width:14.5px;height:14.5px;background:#636363;border-radius:50%;"></div>
<span class="t" style="left:164.36px;top:586.00px;font-size:12px;color:#fff;">3</span>
<svg class="b" style="left:204.7px;top:586.1px;--l:#9aa5bd;--m:#6f7d9b;--d:#3a4560;--a:#c9c9d6;--bo:1;--co:1;" width="13.4" height="15.4" viewBox="0 0 64 64" preserveAspectRatio="none"><use href="#ymini"/></svg>
<div class="b " style="left:191.45px;top:585.55px;width:14.5px;height:14.5px;background:#636363;border-radius:50%;"></div>
<span class="t" style="left:195.36px;top:586.00px;font-size:12px;color:#fff;">8</span>
<svg class="b" style="left:235.7px;top:586.1px;--l:#a4d6e1;--m:#7cbccb;--d:#336f7e;--a:none;--bo:.8;--co:1;" width="13.4" height="15.4" viewBox="0 0 64 64" preserveAspectRatio="none"><use href="#ymini"/></svg>
<div class="b " style="left:222.45px;top:585.55px;width:14.5px;height:14.5px;background:#636363;border-radius:50%;"></div>
<span class="t" style="left:226.36px;top:586.00px;font-size:12px;color:#fff;">7</span>
<svg class="b" style="left:253.5px;top:584.5px" width="86.0" height="21"><use href="#star" x="0.10" y="1.0" fill="#fff8e0" stroke="#e2b35c" stroke-width="1" stroke-linejoin="round"/><use href="#star" x="17.15" y="1.0" fill="#fff8e0" stroke="#e2b35c" stroke-width="1" stroke-linejoin="round"/><use href="#star" x="34.20" y="1.0" fill="#fff8e0" stroke="#e2b35c" stroke-width="1" stroke-linejoin="round"/><use href="#star" x="51.25" y="1.0" fill="none" stroke="#b4b4b4" stroke-width="1" stroke-linejoin="round"/><use href="#star" x="68.30" y="1.0" fill="none" stroke="#b4b4b4" stroke-width="1" stroke-linejoin="round"/></svg>
<span class="t" style="left:54.00px;top:607.90px;font-size:12px;color:#000;letter-spacing:-0.320px;">Colorways 8</span>
<svg class="b" style="left:142.7px;top:607.1px;--l:#ecd5cf;--m:#c0a7a1;--d:#8a7570;--a:none;--bo:1;--co:1;" width="13.4" height="15.4" viewBox="0 0 64 64" preserveAspectRatio="none"><use href="#ymini"/></svg>
<div class="b " style="left:129.45px;top:606.55px;width:14.5px;height:14.5px;background:#636363;border-radius:50%;"></div>
<span class="t" style="left:133.36px;top:607.00px;font-size:12px;color:#fff;">1</span>
<svg class="b" style="left:173.7px;top:607.1px;--l:#7d4f96;--m:#684a8c;--d:#221a3c;--a:#4a74a6;--bo:1;--co:1;" width="13.4" height="15.4" viewBox="0 0 64 64" preserveAspectRatio="none"><use href="#ymini"/></svg>
<div class="b " style="left:160.45px;top:606.55px;width:14.5px;height:14.5px;background:#636363;border-radius:50%;"></div>
<span class="t" style="left:164.36px;top:607.00px;font-size:12px;color:#fff;">3</span>
<svg class="b" style="left:204.7px;top:607.1px;--l:#d3c7d1;--m:#a899a6;--d:#70646f;--a:none;--bo:1;--co:1;" width="13.4" height="15.4" viewBox="0 0 64 64" preserveAspectRatio="none"><use href="#ymini"/></svg>
<div class="b " style="left:191.45px;top:606.55px;width:14.5px;height:14.5px;background:#636363;border-radius:50%;"></div>
<span class="t" style="left:195.36px;top:607.00px;font-size:12px;color:#fff;">2</span>
<svg class="b" style="left:235.7px;top:607.1px;--l:#7c1858;--m:#6c124c;--d:#2c041c;--a:none;--bo:1;--co:1;" width="13.4" height="15.4" viewBox="0 0 64 64" preserveAspectRatio="none"><use href="#ymini"/></svg>
<div class="b " style="left:222.45px;top:606.55px;width:14.5px;height:14.5px;background:#636363;border-radius:50%;"></div>
<span class="t" style="left:226.36px;top:607.00px;font-size:12px;color:#fff;">4</span>
<svg class="b" style="left:253.5px;top:605.5px" width="86.0" height="21"><use href="#star" x="0.10" y="1.0" fill="#fff8e0" stroke="#e2b35c" stroke-width="1" stroke-linejoin="round"/><use href="#star" x="17.15" y="1.0" fill="#fff8e0" stroke="#e2b35c" stroke-width="1" stroke-linejoin="round"/><use href="#star" x="34.20" y="1.0" fill="none" stroke="#b4b4b4" stroke-width="1" stroke-linejoin="round"/><use href="#star" x="51.25" y="1.0" fill="none" stroke="#b4b4b4" stroke-width="1" stroke-linejoin="round"/><use href="#star" x="68.30" y="1.0" fill="none" stroke="#b4b4b4" stroke-width="1" stroke-linejoin="round"/></svg>
<span class="t" style="left:54.00px;top:628.90px;font-size:12px;color:#000;letter-spacing:-0.320px;">Colorways 9</span>
<svg class="b" style="left:142.7px;top:628.1px;--l:#d3c7d1;--m:#a899a6;--d:#70646f;--a:none;--bo:1;--co:1;" width="13.4" height="15.4" viewBox="0 0 64 64" preserveAspectRatio="none"><use href="#ymini"/></svg>
<div class="b " style="left:129.45px;top:627.55px;width:14.5px;height:14.5px;background:#636363;border-radius:50%;"></div>
<span class="t" style="left:133.36px;top:628.00px;font-size:12px;color:#fff;">2</span>
<svg class="b" style="left:173.7px;top:628.1px;--l:#7d4f96;--m:#684a8c;--d:#221a3c;--a:#4a74a6;--bo:1;--co:1;" width="13.4" height="15.4" viewBox="0 0 64 64" preserveAspectRatio="none"><use href="#ymini"/></svg>
<div class="b " style="left:160.45px;top:627.55px;width:14.5px;height:14.5px;background:#636363;border-radius:50%;"></div>
<span class="t" style="left:164.36px;top:628.00px;font-size:12px;color:#fff;">3</span>
<svg class="b" style="left:204.7px;top:628.1px;--l:#7c1858;--m:#6c124c;--d:#2c041c;--a:none;--bo:1;--co:1;" width="13.4" height="15.4" viewBox="0 0 64 64" preserveAspectRatio="none"><use href="#ymini"/></svg>
<div class="b " style="left:191.45px;top:627.55px;width:14.5px;height:14.5px;background:#636363;border-radius:50%;"></div>
<span class="t" style="left:195.36px;top:628.00px;font-size:12px;color:#fff;">4</span>
<svg class="b" style="left:235.7px;top:628.1px;--l:#a67dad;--m:#90689a;--d:#4a2c54;--a:none;--bo:.22;--co:.45;" width="13.4" height="15.4" viewBox="0 0 64 64" preserveAspectRatio="none"><use href="#ymini"/></svg>
<div class="b " style="left:222.45px;top:627.55px;width:14.5px;height:14.5px;background:#636363;border-radius:50%;"></div>
<span class="t" style="left:226.36px;top:628.00px;font-size:12px;color:#fff;">6</span>
<svg class="b" style="left:253.5px;top:626.5px" width="86.0" height="21"><use href="#star" x="0.10" y="1.0" fill="#fff8e0" stroke="#e2b35c" stroke-width="1" stroke-linejoin="round"/><use href="#star" x="17.15" y="1.0" fill="#fff8e0" stroke="#e2b35c" stroke-width="1" stroke-linejoin="round"/><use href="#star" x="34.20" y="1.0" fill="#fff8e0" stroke="#e2b35c" stroke-width="1" stroke-linejoin="round"/><use href="#star" x="51.25" y="1.0" fill="#fff8e0" stroke="#e2b35c" stroke-width="1" stroke-linejoin="round"/><use href="#star" x="68.30" y="1.0" fill="none" stroke="#b4b4b4" stroke-width="1" stroke-linejoin="round"/></svg>
<span class="t" style="left:54.00px;top:649.90px;font-size:12px;color:#000;letter-spacing:-0.283px;">Colorways 10</span>
<svg class="b" style="left:142.7px;top:649.1px;--l:#ecd5cf;--m:#c0a7a1;--d:#8a7570;--a:none;--bo:1;--co:1;" width="13.4" height="15.4" viewBox="0 0 64 64" preserveAspectRatio="none"><use href="#ymini"/></svg>
<div class="b " style="left:129.45px;top:648.55px;width:14.5px;height:14.5px;background:#636363;border-radius:50%;"></div>
<span class="t" style="left:133.36px;top:649.00px;font-size:12px;color:#fff;">1</span>
<svg class="b" style="left:173.7px;top:649.1px;--l:#d3c7d1;--m:#a899a6;--d:#70646f;--a:none;--bo:1;--co:1;" width="13.4" height="15.4" viewBox="0 0 64 64" preserveAspectRatio="none"><use href="#ymini"/></svg>
<div class="b " style="left:160.45px;top:648.55px;width:14.5px;height:14.5px;background:#636363;border-radius:50%;"></div>
<span class="t" style="left:164.36px;top:649.00px;font-size:12px;color:#fff;">2</span>
<svg class="b" style="left:204.7px;top:649.1px;--l:#7d4f96;--m:#684a8c;--d:#221a3c;--a:#4a74a6;--bo:1;--co:1;" width="13.4" height="15.4" viewBox="0 0 64 64" preserveAspectRatio="none"><use href="#ymini"/></svg>
<div class="b " style="left:191.45px;top:648.55px;width:14.5px;height:14.5px;background:#636363;border-radius:50%;"></div>
<span class="t" style="left:195.36px;top:649.00px;font-size:12px;color:#fff;">3</span>
<svg class="b" style="left:235.7px;top:649.1px;--l:#a4d6e1;--m:#7cbccb;--d:#336f7e;--a:none;--bo:.8;--co:1;" width="13.4" height="15.4" viewBox="0 0 64 64" preserveAspectRatio="none"><use href="#ymini"/></svg>
<div class="b " style="left:222.45px;top:648.55px;width:14.5px;height:14.5px;background:#636363;border-radius:50%;"></div>
<span class="t" style="left:226.36px;top:649.00px;font-size:12px;color:#fff;">7</span>
<svg class="b" style="left:253.5px;top:647.5px" width="86.0" height="21"><use href="#star" x="0.10" y="1.0" fill="#fff8e0" stroke="#e2b35c" stroke-width="1" stroke-linejoin="round"/><use href="#star" x="17.15" y="1.0" fill="#fff8e0" stroke="#e2b35c" stroke-width="1" stroke-linejoin="round"/><use href="#star" x="34.20" y="1.0" fill="#fff8e0" stroke="#e2b35c" stroke-width="1" stroke-linejoin="round"/><use href="#star" x="51.25" y="1.0" fill="#fff8e0" stroke="#e2b35c" stroke-width="1" stroke-linejoin="round"/><use href="#star" x="68.30" y="1.0" fill="none" stroke="#b4b4b4" stroke-width="1" stroke-linejoin="round"/></svg>
<span class="t" style="left:54.00px;top:670.90px;font-size:12px;color:#000;letter-spacing:-0.209px;">Colorways 11</span>
<svg class="b" style="left:142.7px;top:670.1px;--l:#ecd5cf;--m:#c0a7a1;--d:#8a7570;--a:none;--bo:1;--co:1;" width="13.4" height="15.4" viewBox="0 0 64 64" preserveAspectRatio="none"><use href="#ymini"/></svg>
<div class="b " style="left:129.45px;top:669.55px;width:14.5px;height:14.5px;background:#636363;border-radius:50%;"></div>
<span class="t" style="left:133.36px;top:670.00px;font-size:12px;color:#fff;">1</span>
<svg class="b" style="left:173.7px;top:670.1px;--l:#d3c7d1;--m:#a899a6;--d:#70646f;--a:none;--bo:1;--co:1;" width="13.4" height="15.4" viewBox="0 0 64 64" preserveAspectRatio="none"><use href="#ymini"/></svg>
<div class="b " style="left:160.45px;top:669.55px;width:14.5px;height:14.5px;background:#636363;border-radius:50%;"></div>
<span class="t" style="left:164.36px;top:670.00px;font-size:12px;color:#fff;">2</span>
<svg class="b" style="left:204.7px;top:670.1px;--l:#d0bcb8;--m:#a99ca2;--d:#33333f;--a:#676c90;--bo:1;--co:1;" width="13.4" height="15.4" viewBox="0 0 64 64" preserveAspectRatio="none"><use href="#ymini"/></svg>
<div class="b " style="left:191.45px;top:669.55px;width:14.5px;height:14.5px;background:#636363;border-radius:50%;"></div>
<span class="t" style="left:195.36px;top:670.00px;font-size:12px;color:#fff;">5</span>
<svg class="b" style="left:235.7px;top:670.1px;--l:#a4d6e1;--m:#7cbccb;--d:#336f7e;--a:none;--bo:.8;--co:1;" width="13.4" height="15.4" viewBox="0 0 64 64" preserveAspectRatio="none"><use href="#ymini"/></svg>
<div class="b " style="left:222.45px;top:669.55px;width:14.5px;height:14.5px;background:#636363;border-radius:50%;"></div>
<span class="t" style="left:226.36px;top:670.00px;font-size:12px;color:#fff;">7</span>
<svg class="b" style="left:253.5px;top:668.5px" width="86.0" height="21"><use href="#star" x="0.10" y="1.0" fill="#fff8e0" stroke="#e2b35c" stroke-width="1" stroke-linejoin="round"/><use href="#star" x="17.15" y="1.0" fill="#fff8e0" stroke="#e2b35c" stroke-width="1" stroke-linejoin="round"/><use href="#star" x="34.20" y="1.0" fill="#fff8e0" stroke="#e2b35c" stroke-width="1" stroke-linejoin="round"/><use href="#star" x="51.25" y="1.0" fill="#fff8e0" stroke="#e2b35c" stroke-width="1" stroke-linejoin="round"/><use href="#star" x="68.30" y="1.0" fill="none" stroke="#b4b4b4" stroke-width="1" stroke-linejoin="round"/></svg>
<span class="t" style="left:54.00px;top:691.90px;font-size:12px;color:#000;letter-spacing:-0.283px;">Colorways 12</span>
<svg class="b" style="left:142.7px;top:691.1px;--l:#7c1858;--m:#6c124c;--d:#2c041c;--a:none;--bo:1;--co:1;" width="13.4" height="15.4" viewBox="0 0 64 64" preserveAspectRatio="none"><use href="#ymini"/></svg>
<div class="b " style="left:129.45px;top:690.55px;width:14.5px;height:14.5px;background:#636363;border-radius:50%;"></div>
<span class="t" style="left:133.36px;top:691.00px;font-size:12px;color:#fff;">4</span>
<svg class="b" style="left:173.7px;top:691.1px;--l:#d0bcb8;--m:#a99ca2;--d:#33333f;--a:#676c90;--bo:1;--co:1;" width="13.4" height="15.4" viewBox="0 0 64 64" preserveAspectRatio="none"><use href="#ymini"/></svg>
<div class="b " style="left:160.45px;top:690.55px;width:14.5px;height:14.5px;background:#636363;border-radius:50%;"></div>
<span class="t" style="left:164.36px;top:691.00px;font-size:12px;color:#fff;">5</span>
<svg class="b" style="left:204.7px;top:691.1px;--l:#a67dad;--m:#90689a;--d:#4a2c54;--a:none;--bo:.22;--co:.45;" width="13.4" height="15.4" viewBox="0 0 64 64" preserveAspectRatio="none"><use href="#ymini"/></svg>
<div class="b " style="left:191.45px;top:690.55px;width:14.5px;height:14.5px;background:#636363;border-radius:50%;"></div>
<span class="t" style="left:195.36px;top:691.00px;font-size:12px;color:#fff;">6</span>
<svg class="b" style="left:235.7px;top:691.1px;--l:#a4d6e1;--m:#7cbccb;--d:#336f7e;--a:none;--bo:.8;--co:1;" width="13.4" height="15.4" viewBox="0 0 64 64" preserveAspectRatio="none"><use href="#ymini"/></svg>
<div class="b " style="left:222.45px;top:690.55px;width:14.5px;height:14.5px;background:#636363;border-radius:50%;"></div>
<span class="t" style="left:226.36px;top:691.00px;font-size:12px;color:#fff;">7</span>
<svg class="b" style="left:253.5px;top:689.5px" width="86.0" height="21"><use href="#star" x="0.10" y="1.0" fill="#fff8e0" stroke="#e2b35c" stroke-width="1" stroke-linejoin="round"/><use href="#star" x="17.15" y="1.0" fill="#fff8e0" stroke="#e2b35c" stroke-width="1" stroke-linejoin="round"/><use href="#star" x="34.20" y="1.0" fill="#fff8e0" stroke="#e2b35c" stroke-width="1" stroke-linejoin="round"/><use href="#star" x="51.25" y="1.0" fill="#fff8e0" stroke="#e2b35c" stroke-width="1" stroke-linejoin="round"/><use href="#star" x="68.30" y="1.0" fill="#fff8e0" stroke="#e2b35c" stroke-width="1" stroke-linejoin="round"/></svg>
<div class="b " style="left:32.0px;top:410.0px;width:1px;height:301px;background:#bdbdbd;"></div>
<div class="b " style="left:49.0px;top:410.0px;width:1px;height:301px;background:#bdbdbd;"></div>
<div class="b " style="left:128.0px;top:410.0px;width:1px;height:301px;background:#bdbdbd;"></div>
<div class="b " style="left:253.0px;top:410.0px;width:1px;height:301px;background:#bdbdbd;"></div>
<div class="b " style="left:339.0px;top:410.0px;width:1px;height:301px;background:#bdbdbd;"></div>
<div class="b " style="left:377.0px;top:410.0px;width:1px;height:301px;background:#bdbdbd;"></div>
<div class="b " style="left:32.5px;top:437.0px;width:345.0px;height:1px;background:#bdbdbd;"></div>
<div class="b " style="left:32.5px;top:458.0px;width:345.0px;height:1px;background:#bdbdbd;"></div>
<div class="b " style="left:32.5px;top:479.0px;width:345.0px;height:1px;background:#bdbdbd;"></div>
<div class="b " style="left:32.5px;top:500.0px;width:345.0px;height:1px;background:#bdbdbd;"></div>
<div class="b " style="left:32.5px;top:521.0px;width:345.0px;height:1px;background:#bdbdbd;"></div>
<div class="b " style="left:32.5px;top:542.0px;width:345.0px;height:1px;background:#bdbdbd;"></div>
<div class="b " style="left:32.5px;top:563.0px;width:345.0px;height:1px;background:#bdbdbd;"></div>
<div class="b " style="left:32.5px;top:584.0px;width:345.0px;height:1px;background:#bdbdbd;"></div>
<div class="b " style="left:32.5px;top:605.0px;width:345.0px;height:1px;background:#bdbdbd;"></div>
<div class="b " style="left:32.5px;top:626.0px;width:345.0px;height:1px;background:#bdbdbd;"></div>
<div class="b " style="left:32.5px;top:647.0px;width:345.0px;height:1px;background:#bdbdbd;"></div>
<div class="b " style="left:32.5px;top:668.0px;width:345.0px;height:1px;background:#bdbdbd;"></div>
<div class="b " style="left:32.5px;top:689.0px;width:345.0px;height:1px;background:#bdbdbd;"></div>
<div class="b " style="left:32.5px;top:710.0px;width:345.0px;height:1px;background:#bdbdbd;"></div>
<div class="b " style="left:32.5px;top:410.0px;width:345.0px;height:1px;background:#bdbdbd;"></div>
<div class="b " style="left:50.0px;top:438.0px;width:327.0px;height:20px;pointer-events:none;"></div>
<span class="t" style="left:52.30px;top:731.30px;font-size:12px;color:#000;font-weight:bold;letter-spacing:-0.521px;">Colorways</span>
<span class="t" style="left:116.50px;top:731.30px;font-size:12px;color:#000;font-weight:bold;">-</span>
<span class="t" style="left:129.00px;top:731.30px;font-size:12px;color:#000;font-weight:bold;letter-spacing:-0.271px;">Color to Yarn Allocation</span>
<div class="b " style="left:52.3px;top:755.6px;width:69px;height:42px;background:#e6e6e6;border:1px solid #333;border-radius:3.5px;box-sizing:border-box;"></div>
<svg class="b" style="left:54.9px;top:767.6px" width="18.0" height="17.0" viewBox="0 0 18 17"><path d="M4.6 2.2 L11.5 2.2 L16 14 Q9 17.2 1 14.6 Z" fill="#ffffff" stroke="#2a2a2a" stroke-width="1.1" stroke-linejoin="round"/><circle cx="12.3" cy="4.6" r="3.9" fill="#2f2f2f"/><path d="M10.2 4.6 L11.8 6.2 L14.4 3.1" fill="none" stroke="#fff" stroke-width="1.2"/></svg>
<svg class="b" style="left:86.6px;top:760.2px;--l:#ecd5cf;--m:#a38d88;--d:#4b403d;--a:none;--bo:1;--co:1;" width="31.5" height="33.5" viewBox="0 0 64 64" preserveAspectRatio="none"><use href="#yarn"/></svg>
<div class="b " style="left:75.39999999999999px;top:759.3000000000001px;width:14.6px;height:14.6px;background:#636363;border-radius:50%;"></div>
<span class="t" style="left:79.36px;top:759.80px;font-size:12px;color:#fff;">1</span>
<div class="b " style="left:131.3px;top:755.6px;width:69px;height:42px;background:#e6e6e6;border:1px solid #333;border-radius:3.5px;box-sizing:border-box;"></div>
<svg class="b" style="left:133.9px;top:767.6px" width="18.0" height="17.0" viewBox="0 0 18 17"><path d="M4.6 2.2 L11.5 2.2 L16 14 Q9 17.2 1 14.6 Z" fill="#0000fe" stroke="#0000fe" stroke-width="1.1" stroke-linejoin="round"/><circle cx="12.3" cy="4.6" r="3.9" fill="#2f2f2f"/><path d="M10.2 4.6 L11.8 6.2 L14.4 3.1" fill="none" stroke="#fff" stroke-width="1.2"/></svg>
<svg class="b" style="left:165.60000000000002px;top:760.2px;--l:#ecd5cf;--m:#a38d88;--d:#4b403d;--a:none;--bo:1;--co:1;" width="31.5" height="33.5" viewBox="0 0 64 64" preserveAspectRatio="none"><use href="#yarn"/></svg>
<div class="b " style="left:154.4px;top:759.3000000000001px;width:14.6px;height:14.6px;background:#636363;border-radius:50%;"></div>
<span class="t" style="left:158.36px;top:759.80px;font-size:12px;color:#fff;">1</span>
<div class="b " style="left:210.3px;top:755.6px;width:69px;height:42px;background:#e6e6e6;border:1px solid #333;border-radius:3.5px;box-sizing:border-box;"></div>
<svg class="b" style="left:212.9px;top:767.6px" width="18.0" height="17.0" viewBox="0 0 18 17"><path d="M4.6 2.2 L11.5 2.2 L16 14 Q9 17.2 1 14.6 Z" fill="#00408e" stroke="#00408e" stroke-width="1.1" stroke-linejoin="round"/><circle cx="12.3" cy="4.6" r="3.9" fill="#2f2f2f"/><path d="M10.2 4.6 L11.8 6.2 L14.4 3.1" fill="none" stroke="#fff" stroke-width="1.2"/></svg>
<svg class="b" style="left:244.60000000000002px;top:760.2px;--l:#ecd5cf;--m:#a38d88;--d:#4b403d;--a:none;--bo:1;--co:1;" width="31.5" height="33.5" viewBox="0 0 64 64" preserveAspectRatio="none"><use href="#yarn"/></svg>
<div class="b " style="left:233.4px;top:759.3000000000001px;width:14.6px;height:14.6px;background:#636363;border-radius:50%;"></div>
<span class="t" style="left:237.36px;top:759.80px;font-size:12px;color:#fff;">1</span>
<div class="b " style="left:289.3px;top:755.6px;width:69px;height:42px;background:#e6e6e6;border:1px solid #333;border-radius:3.5px;box-sizing:border-box;"></div>
<svg class="b" style="left:291.90000000000003px;top:767.6px" width="18.0" height="17.0" viewBox="0 0 18 17"><path d="M4.6 2.2 L11.5 2.2 L16 14 Q9 17.2 1 14.6 Z" fill="#7c2613" stroke="#7c2613" stroke-width="1.1" stroke-linejoin="round"/><circle cx="12.3" cy="4.6" r="3.9" fill="#2f2f2f"/><path d="M10.2 4.6 L11.8 6.2 L14.4 3.1" fill="none" stroke="#fff" stroke-width="1.2"/></svg>
<svg class="b" style="left:323.6px;top:760.2px;--l:#ecd5cf;--m:#a38d88;--d:#4b403d;--a:none;--bo:1;--co:1;" width="31.5" height="33.5" viewBox="0 0 64 64" preserveAspectRatio="none"><use href="#yarn"/></svg>
<div class="b " style="left:312.4px;top:759.3000000000001px;width:14.6px;height:14.6px;background:#636363;border-radius:50%;"></div>
<span class="t" style="left:316.36px;top:759.80px;font-size:12px;color:#fff;">1</span>
<span class="t" style="left:52.30px;top:808.30px;font-size:12px;color:#000;letter-spacing:-0.115px;">(Drag yarn here for assignment)</span>
<div class="b " style="left:31.8px;top:823.3px;width:100px;height:26.5px;background:#f7f7f7;border-radius:4px;box-shadow:0 1px 2.5px rgba(0,0,0,.26),0 0 1px rgba(0,0,0,.14);background:linear-gradient(#fbfbfb,#f1f1f1);"></div>
<span class="t" style="left:52.96px;top:829.85px;font-size:12px;color:#000;letter-spacing:-0.186px;">Compare...</span>
<div class="b" style="left:398px;top:322px;width:1px;height:521px;background:repeating-linear-gradient(to bottom,#7c7c7c 0,#7c7c7c 2px,transparent 2px,transparent 4px)"></div>
<span class="t" style="left:411.30px;top:312.80px;font-size:12px;color:#000;font-weight:bold;letter-spacing:0.056px;">Shuffle Mode</span>
<div class="b " style="left:413.2px;top:340px;width:25.6px;height:18px;background:#b6b6b6;border-radius:3px;"></div>
<span class="t" style="left:422.88px;top:342.00px;font-size:10px;color:#4f4f4f;">&lt;</span>
<span class="t" style="left:449.70px;top:341.70px;font-size:12px;color:#000;letter-spacing:-0.249px;">1 from 1668</span>
<div class="b " style="left:521px;top:340px;width:25.7px;height:18px;background:#f7f7f7;border-radius:3px;box-shadow:0 1px 2.5px rgba(0,0,0,.26),0 0 1px rgba(0,0,0,.14);background:linear-gradient(#fbfbfb,#f1f1f1);"></div>
<span class="t" style="left:530.93px;top:342.00px;font-size:10px;color:#000;">&gt;</span>
<span class="t" style="left:567.20px;top:340.00px;font-size:12px;color:#000;letter-spacing:-0.002px;">Description</span>
<div class="b " style="left:637.3px;top:340px;width:93.7px;height:18px;background:#2b2b2b;border-radius:2px;"></div>
<span class="t" style="left:648.43px;top:341.30px;font-size:12px;color:#fff;font-weight:bold;letter-spacing:-0.531px;">Colorways 13</span>
<div class="b " style="left:751px;top:340px;width:48.7px;height:18px;background:#f7f7f7;border-radius:3px;box-shadow:0 1px 2.5px rgba(0,0,0,.26),0 0 1px rgba(0,0,0,.14);background:linear-gradient(#fbfbfb,#f1f1f1);"></div>
<span class="t" style="left:759.95px;top:341.60px;font-size:12px;color:#000;letter-spacing:0.196px;">Apply</span>
<svg class="b" style="left:413.5px;top:370px;--l:#ecd5cf;--m:#a38d88;--d:#4b403d;--a:none;--bo:1;--co:1;" width="32" height="31.5" viewBox="0 0 64 64" preserveAspectRatio="none"><use href="#yarn"/></svg>
<div class="b " style="left:413.1px;top:370px;width:14px;height:14.3px;background:#646464;"></div>
<span class="t" style="left:416.76px;top:370.20px;font-size:12px;color:#fff;">1</span>
<svg class="b" style="left:453.5px;top:370px;--l:#d3c7d1;--m:#8e828d;--d:#3d373d;--a:none;--bo:1;--co:1;" width="32" height="31.5" viewBox="0 0 64 64" preserveAspectRatio="none"><use href="#yarn"/></svg>
<div class="b " style="left:453.1px;top:370px;width:14px;height:14.3px;background:#646464;"></div>
<span class="t" style="left:456.76px;top:370.20px;font-size:12px;color:#fff;">2</span>
<svg class="b" style="left:493.5px;top:370px;--l:#7d4f96;--m:#583e77;--d:#120e21;--a:#4a74a6;--bo:1;--co:1;" width="32" height="31.5" viewBox="0 0 64 64" preserveAspectRatio="none"><use href="#yarn"/></svg>
<div class="b " style="left:493.1px;top:370px;width:14px;height:14.3px;background:#646464;"></div>
<span class="t" style="left:496.76px;top:370.20px;font-size:12px;color:#fff;">3</span>
<svg class="b" style="left:533.5px;top:370px;--l:#7c1858;--m:#5b0f40;--d:#18020f;--a:none;--bo:1;--co:1;" width="32" height="31.5" viewBox="0 0 64 64" preserveAspectRatio="none"><use href="#yarn"/></svg>
<div class="b " style="left:533.1px;top:370px;width:14px;height:14.3px;background:#646464;"></div>
<span class="t" style="left:536.76px;top:370.20px;font-size:12px;color:#fff;">4</span>
<div class="b " style="left:413px;top:427px;width:500px;height:399.7px;background:#f1edec;"></div>
<svg class="b" style="left:465.3px;top:427.2px" width="395.8" height="397.6" viewBox="0 0 395.8 397.6"><defs><clipPath id="cAbg"><rect x="0.0" y="0" width="65.7" height="397.6"/><rect x="130.9" y="0" width="65.7" height="397.6"/><rect x="261.8" y="0" width="65.7" height="397.6"/><rect x="392.7" y="0" width="65.7" height="397.6"/></clipPath><clipPath id="cBbg"><rect x="65.7" y="0" width="65.2" height="397.6"/><rect x="196.6" y="0" width="65.2" height="397.6"/><rect x="327.5" y="0" width="65.2" height="397.6"/><rect x="458.4" y="0" width="65.2" height="397.6"/></clipPath><clipPath id="cAs"><rect x="28.3" y="0" width="9.4" height="397.6"/><rect x="159.2" y="0" width="9.4" height="397.6"/><rect x="290.1" y="0" width="9.4" height="397.6"/><rect x="421.0" y="0" width="9.4" height="397.6"/></clipPath><clipPath id="cBt"><rect x="75.0" y="0" width="4.8" height="397.6"/><rect x="117.1" y="0" width="4.8" height="397.6"/><rect x="205.9" y="0" width="4.8" height="397.6"/><rect x="248.0" y="0" width="4.8" height="397.6"/><rect x="336.8" y="0" width="4.8" height="397.6"/><rect x="378.9" y="0" width="4.8" height="397.6"/><rect x="467.7" y="0" width="4.8" height="397.6"/><rect x="509.8" y="0" width="4.8" height="397.6"/></clipPath><clipPath id="cBw"><rect x="94.0" y="0" width="9.3" height="397.6"/><rect x="224.9" y="0" width="9.3" height="397.6"/><rect x="355.8" y="0" width="9.3" height="397.6"/><rect x="486.7" y="0" width="9.3" height="397.6"/></clipPath><path id="bS1" d="M0.0 0.0 L2.3 3.4 L4.7 0.0 L7.0 3.4 L9.3 0.0 L11.7 3.4 L14.0 0.0 L16.4 3.4 L18.7 0.0 L21.0 3.4 L23.4 0.0 L25.7 3.4 L28.0 0.0 L30.4 3.4 L32.7 0.0 L35.1 3.4 L37.4 0.0 L39.7 3.4 L42.1 0.0 L44.4 3.4 L46.8 0.0 L49.1 3.4 L51.4 0.0 L53.8 3.4 L56.1 0.0 L58.4 3.4 L60.8 0.0 L63.1 3.4 L65.5 0.0 L67.8 3.4 L70.1 0.0 L72.5 3.4 L74.8 0.0 L77.1 3.4 L79.5 0.0 L81.8 3.4 L84.1 0.0 L86.5 3.4 L88.8 0.0 L91.2 3.4 L93.5 0.0 L95.8 3.4 L98.2 0.0 L100.5 3.4 L102.8 0.0 L105.2 3.4 L107.5 0.0 L109.9 3.4 L112.2 0.0 L114.5 3.4 L116.9 0.0 L119.2 3.4 L121.5 0.0 L123.9 3.4 L126.2 0.0 L128.6 3.4 L130.9 0.0 L133.2 3.4 L135.6 0.0 L137.9 3.4 L140.2 0.0 L142.6 3.4 L144.9 0.0 L147.3 3.4 L149.6 0.0 L151.9 3.4 L154.3 0.0 L156.6 3.4 L158.9 0.0 L161.3 3.4 L163.6 0.0 L166.0 3.4 L168.3 0.0 L170.6 3.4 L173.0 0.0 L175.3 3.4 L177.7 0.0 L180.0 3.4 L182.3 0.0 L184.7 3.4 L187.0 0.0 L189.3 3.4 L191.7 0.0 L194.0 3.4 L196.3 0.0 L198.7 3.4 L201.0 0.0 L203.4 3.4 L205.7 0.0 L208.0 3.4 L210.4 0.0 L212.7 3.4 L215.0 0.0 L217.4 3.4 L219.7 0.0 L222.1 3.4 L224.4 0.0 L226.7 3.4 L229.1 0.0 L231.4 3.4 L233.8 0.0 L236.1 3.4 L238.4 0.0 L240.8 3.4 L243.1 0.0 L245.4 3.4 L247.8 0.0 L250.1 3.4 L252.4 0.0 L254.8 3.4 L257.1 0.0 L259.5 3.4 L261.8 0.0 L264.1 3.4 L266.5 0.0 L268.8 3.4 L271.1 0.0 L273.5 3.4 L275.8 0.0 L278.2 3.4 L280.5 0.0 L282.8 3.4 L285.2 0.0 L287.5 3.4 L289.8 0.0 L292.2 3.4 L294.5 0.0 L296.9 3.4 L299.2 0.0 L301.5 3.4 L303.9 0.0 L306.2 3.4 L308.6 0.0 L310.9 3.4 L313.2 0.0 L315.6 3.4 L317.9 0.0 L320.2 3.4 L322.6 0.0 L324.9 3.4 L327.2 0.0 L329.6 3.4 L331.9 0.0 L334.3 3.4 L336.6 0.0 L338.9 3.4 L341.3 0.0 L343.6 3.4 L345.9 0.0 L348.3 3.4 L350.6 0.0 L353.0 3.4 L355.3 0.0 L357.6 3.4 L360.0 0.0 L362.3 3.4 L364.6 0.0 L367.0 3.4 L369.3 0.0 L371.7 3.4 L374.0 0.0 L376.3 3.4 L378.7 0.0 L381.0 3.4 L383.3 0.0 L385.7 3.4 L388.0 0.0 L390.4 3.4 L392.7 0.0 L395.0 3.4 L397.4 0.0 L399.7 3.4 L399.7 69.6 L397.4 66.2 L395.0 69.6 L392.7 66.2 L390.4 69.6 L388.0 66.2 L385.7 69.6 L383.3 66.2 L381.0 69.6 L378.7 66.2 L376.3 69.6 L374.0 66.2 L371.7 69.6 L369.3 66.2 L367.0 69.6 L364.6 66.2 L362.3 69.6 L360.0 66.2 L357.6 69.6 L355.3 66.2 L353.0 69.6 L350.6 66.2 L348.3 69.6 L345.9 66.2 L343.6 69.6 L341.3 66.2 L338.9 69.6 L336.6 66.2 L334.3 69.6 L331.9 66.2 L329.6 69.6 L327.2 66.2 L324.9 69.6 L322.6 66.2 L320.2 69.6 L317.9 66.2 L315.6 69.6 L313.2 66.2 L310.9 69.6 L308.6 66.2 L306.2 69.6 L303.9 66.2 L301.5 69.6 L299.2 66.2 L296.9 69.6 L294.5 66.2 L292.2 69.6 L289.8 66.2 L287.5 69.6 L285.2 66.2 L282.8 69.6 L280.5 66.2 L278.2 69.6 L275.8 66.2 L273.5 69.6 L271.1 66.2 L268.8 69.6 L266.5 66.2 L264.1 69.6 L261.8 66.2 L259.5 69.6 L257.1 66.2 L254.8 69.6 L252.4 66.2 L250.1 69.6 L247.8 66.2 L245.4 69.6 L243.1 66.2 L240.8 69.6 L238.4 66.2 L236.1 69.6 L233.8 66.2 L231.4 69.6 L229.1 66.2 L226.7 69.6 L224.4 66.2 L222.1 69.6 L219.7 66.2 L217.4 69.6 L215.0 66.2 L212.7 69.6 L210.4 66.2 L208.0 69.6 L205.7 66.2 L203.4 69.6 L201.0 66.2 L198.7 69.6 L196.3 66.2 L194.0 69.6 L191.7 66.2 L189.3 69.6 L187.0 66.2 L184.7 69.6 L182.3 66.2 L180.0 69.6 L177.7 66.2 L175.3 69.6 L173.0 66.2 L170.6 69.6 L168.3 66.2 L166.0 69.6 L163.6 66.2 L161.3 69.6 L158.9 66.2 L156.6 69.6 L154.3 66.2 L151.9 69.6 L149.6 66.2 L147.3 69.6 L144.9 66.2 L142.6 69.6 L140.2 66.2 L137.9 69.6 L135.6 66.2 L133.2 69.6 L130.9 66.2 L128.6 69.6 L126.2 66.2 L123.9 69.6 L121.5 66.2 L119.2 69.6 L116.9 66.2 L114.5 69.6 L112.2 66.2 L109.9 69.6 L107.5 66.2 L105.2 69.6 L102.8 66.2 L100.5 69.6 L98.2 66.2 L95.8 69.6 L93.5 66.2 L91.2 69.6 L88.8 66.2 L86.5 69.6 L84.1 66.2 L81.8 69.6 L79.5 66.2 L77.1 69.6 L74.8 66.2 L72.5 69.6 L70.1 66.2 L67.8 69.6 L65.5 66.2 L63.1 69.6 L60.8 66.2 L58.4 69.6 L56.1 66.2 L53.8 69.6 L51.4 66.2 L49.1 69.6 L46.8 66.2 L44.4 69.6 L42.1 66.2 L39.7 69.6 L37.4 66.2 L35.1 69.6 L32.7 66.2 L30.4 69.6 L28.0 66.2 L25.7 69.6 L23.4 66.2 L21.0 69.6 L18.7 66.2 L16.4 69.6 L14.0 66.2 L11.7 69.6 L9.3 66.2 L7.0 69.6 L4.7 66.2 L2.3 69.6 L0.0 66.2Z"/><path id="bS2" d="M0.0 0.0 L2.3 3.4 L4.7 0.0 L7.0 3.4 L9.3 0.0 L11.7 3.4 L14.0 0.0 L16.4 3.4 L18.7 0.0 L21.0 3.4 L23.4 0.0 L25.7 3.4 L28.0 0.0 L30.4 3.4 L32.7 0.0 L35.1 3.4 L37.4 0.0 L39.7 3.4 L42.1 0.0 L44.4 3.4 L46.8 0.0 L49.1 3.4 L51.4 0.0 L53.8 3.4 L56.1 0.0 L58.4 3.4 L60.8 0.0 L63.1 3.4 L65.5 0.0 L67.8 3.4 L70.1 0.0 L72.5 3.4 L74.8 0.0 L77.1 3.4 L79.5 0.0 L81.8 3.4 L84.1 0.0 L86.5 3.4 L88.8 0.0 L91.2 3.4 L93.5 0.0 L95.8 3.4 L98.2 0.0 L100.5 3.4 L102.8 0.0 L105.2 3.4 L107.5 0.0 L109.9 3.4 L112.2 0.0 L114.5 3.4 L116.9 0.0 L119.2 3.4 L121.5 0.0 L123.9 3.4 L126.2 0.0 L128.6 3.4 L130.9 0.0 L133.2 3.4 L135.6 0.0 L137.9 3.4 L140.2 0.0 L142.6 3.4 L144.9 0.0 L147.3 3.4 L149.6 0.0 L151.9 3.4 L154.3 0.0 L156.6 3.4 L158.9 0.0 L161.3 3.4 L163.6 0.0 L166.0 3.4 L168.3 0.0 L170.6 3.4 L173.0 0.0 L175.3 3.4 L177.7 0.0 L180.0 3.4 L182.3 0.0 L184.7 3.4 L187.0 0.0 L189.3 3.4 L191.7 0.0 L194.0 3.4 L196.3 0.0 L198.7 3.4 L201.0 0.0 L203.4 3.4 L205.7 0.0 L208.0 3.4 L210.4 0.0 L212.7 3.4 L215.0 0.0 L217.4 3.4 L219.7 0.0 L222.1 3.4 L224.4 0.0 L226.7 3.4 L229.1 0.0 L231.4 3.4 L233.8 0.0 L236.1 3.4 L238.4 0.0 L240.8 3.4 L243.1 0.0 L245.4 3.4 L247.8 0.0 L250.1 3.4 L252.4 0.0 L254.8 3.4 L257.1 0.0 L259.5 3.4 L261.8 0.0 L264.1 3.4 L266.5 0.0 L268.8 3.4 L271.1 0.0 L273.5 3.4 L275.8 0.0 L278.2 3.4 L280.5 0.0 L282.8 3.4 L285.2 0.0 L287.5 3.4 L289.8 0.0 L292.2 3.4 L294.5 0.0 L296.9 3.4 L299.2 0.0 L301.5 3.4 L303.9 0.0 L306.2 3.4 L308.6 0.0 L310.9 3.4 L313.2 0.0 L315.6 3.4 L317.9 0.0 L320.2 3.4 L322.6 0.0 L324.9 3.4 L327.2 0.0 L329.6 3.4 L331.9 0.0 L334.3 3.4 L336.6 0.0 L338.9 3.4 L341.3 0.0 L343.6 3.4 L345.9 0.0 L348.3 3.4 L350.6 0.0 L353.0 3.4 L355.3 0.0 L357.6 3.4 L360.0 0.0 L362.3 3.4 L364.6 0.0 L367.0 3.4 L369.3 0.0 L371.7 3.4 L374.0 0.0 L376.3 3.4 L378.7 0.0 L381.0 3.4 L383.3 0.0 L385.7 3.4 L388.0 0.0 L390.4 3.4 L392.7 0.0 L395.0 3.4 L397.4 0.0 L399.7 3.4 L399.7 69.0 L397.4 65.6 L395.0 69.0 L392.7 65.6 L390.4 69.0 L388.0 65.6 L385.7 69.0 L383.3 65.6 L381.0 69.0 L378.7 65.6 L376.3 69.0 L374.0 65.6 L371.7 69.0 L369.3 65.6 L367.0 69.0 L364.6 65.6 L362.3 69.0 L360.0 65.6 L357.6 69.0 L355.3 65.6 L353.0 69.0 L350.6 65.6 L348.3 69.0 L345.9 65.6 L343.6 69.0 L341.3 65.6 L338.9 69.0 L336.6 65.6 L334.3 69.0 L331.9 65.6 L329.6 69.0 L327.2 65.6 L324.9 69.0 L322.6 65.6 L320.2 69.0 L317.9 65.6 L315.6 69.0 L313.2 65.6 L310.9 69.0 L308.6 65.6 L306.2 69.0 L303.9 65.6 L301.5 69.0 L299.2 65.6 L296.9 69.0 L294.5 65.6 L292.2 69.0 L289.8 65.6 L287.5 69.0 L285.2 65.6 L282.8 69.0 L280.5 65.6 L278.2 69.0 L275.8 65.6 L273.5 69.0 L271.1 65.6 L268.8 69.0 L266.5 65.6 L264.1 69.0 L261.8 65.6 L259.5 69.0 L257.1 65.6 L254.8 69.0 L252.4 65.6 L250.1 69.0 L247.8 65.6 L245.4 69.0 L243.1 65.6 L240.8 69.0 L238.4 65.6 L236.1 69.0 L233.8 65.6 L231.4 69.0 L229.1 65.6 L226.7 69.0 L224.4 65.6 L222.1 69.0 L219.7 65.6 L217.4 69.0 L215.0 65.6 L212.7 69.0 L210.4 65.6 L208.0 69.0 L205.7 65.6 L203.4 69.0 L201.0 65.6 L198.7 69.0 L196.3 65.6 L194.0 69.0 L191.7 65.6 L189.3 69.0 L187.0 65.6 L184.7 69.0 L182.3 65.6 L180.0 69.0 L177.7 65.6 L175.3 69.0 L173.0 65.6 L170.6 69.0 L168.3 65.6 L166.0 69.0 L163.6 65.6 L161.3 69.0 L158.9 65.6 L156.6 69.0 L154.3 65.6 L151.9 69.0 L149.6 65.6 L147.3 69.0 L144.9 65.6 L142.6 69.0 L140.2 65.6 L137.9 69.0 L135.6 65.6 L133.2 69.0 L130.9 65.6 L128.6 69.0 L126.2 65.6 L123.9 69.0 L121.5 65.6 L119.2 69.0 L116.9 65.6 L114.5 69.0 L112.2 65.6 L109.9 69.0 L107.5 65.6 L105.2 69.0 L102.8 65.6 L100.5 69.0 L98.2 65.6 L95.8 69.0 L93.5 65.6 L91.2 69.0 L88.8 65.6 L86.5 69.0 L84.1 65.6 L81.8 69.0 L79.5 65.6 L77.1 69.0 L74.8 65.6 L72.5 69.0 L70.1 65.6 L67.8 69.0 L65.5 65.6 L63.1 69.0 L60.8 65.6 L58.4 69.0 L56.1 65.6 L53.8 69.0 L51.4 65.6 L49.1 69.0 L46.8 65.6 L44.4 69.0 L42.1 65.6 L39.7 69.0 L37.4 65.6 L35.1 69.0 L32.7 65.6 L30.4 69.0 L28.0 65.6 L25.7 69.0 L23.4 65.6 L21.0 69.0 L18.7 65.6 L16.4 69.0 L14.0 65.6 L11.7 69.0 L9.3 65.6 L7.0 69.0 L4.7 65.6 L2.3 69.0 L0.0 65.6Z"/><path id="bT" d="M0.0 0.0 L2.3 3.4 L4.7 0.0 L7.0 3.4 L9.3 0.0 L11.7 3.4 L14.0 0.0 L16.4 3.4 L18.7 0.0 L21.0 3.4 L23.4 0.0 L25.7 3.4 L28.0 0.0 L30.4 3.4 L32.7 0.0 L35.1 3.4 L37.4 0.0 L39.7 3.4 L42.1 0.0 L44.4 3.4 L46.8 0.0 L49.1 3.4 L51.4 0.0 L53.8 3.4 L56.1 0.0 L58.4 3.4 L60.8 0.0 L63.1 3.4 L65.5 0.0 L67.8 3.4 L70.1 0.0 L72.5 3.4 L74.8 0.0 L77.1 3.4 L79.5 0.0 L81.8 3.4 L84.1 0.0 L86.5 3.4 L88.8 0.0 L91.2 3.4 L93.5 0.0 L95.8 3.4 L98.2 0.0 L100.5 3.4 L102.8 0.0 L105.2 3.4 L107.5 0.0 L109.9 3.4 L112.2 0.0 L114.5 3.4 L116.9 0.0 L119.2 3.4 L121.5 0.0 L123.9 3.4 L126.2 0.0 L128.6 3.4 L130.9 0.0 L133.2 3.4 L135.6 0.0 L137.9 3.4 L140.2 0.0 L142.6 3.4 L144.9 0.0 L147.3 3.4 L149.6 0.0 L151.9 3.4 L154.3 0.0 L156.6 3.4 L158.9 0.0 L161.3 3.4 L163.6 0.0 L166.0 3.4 L168.3 0.0 L170.6 3.4 L173.0 0.0 L175.3 3.4 L177.7 0.0 L180.0 3.4 L182.3 0.0 L184.7 3.4 L187.0 0.0 L189.3 3.4 L191.7 0.0 L194.0 3.4 L196.3 0.0 L198.7 3.4 L201.0 0.0 L203.4 3.4 L205.7 0.0 L208.0 3.4 L210.4 0.0 L212.7 3.4 L215.0 0.0 L217.4 3.4 L219.7 0.0 L222.1 3.4 L224.4 0.0 L226.7 3.4 L229.1 0.0 L231.4 3.4 L233.8 0.0 L236.1 3.4 L238.4 0.0 L240.8 3.4 L243.1 0.0 L245.4 3.4 L247.8 0.0 L250.1 3.4 L252.4 0.0 L254.8 3.4 L257.1 0.0 L259.5 3.4 L261.8 0.0 L264.1 3.4 L266.5 0.0 L268.8 3.4 L271.1 0.0 L273.5 3.4 L275.8 0.0 L278.2 3.4 L280.5 0.0 L282.8 3.4 L285.2 0.0 L287.5 3.4 L289.8 0.0 L292.2 3.4 L294.5 0.0 L296.9 3.4 L299.2 0.0 L301.5 3.4 L303.9 0.0 L306.2 3.4 L308.6 0.0 L310.9 3.4 L313.2 0.0 L315.6 3.4 L317.9 0.0 L320.2 3.4 L322.6 0.0 L324.9 3.4 L327.2 0.0 L329.6 3.4 L331.9 0.0 L334.3 3.4 L336.6 0.0 L338.9 3.4 L341.3 0.0 L343.6 3.4 L345.9 0.0 L348.3 3.4 L350.6 0.0 L353.0 3.4 L355.3 0.0 L357.6 3.4 L360.0 0.0 L362.3 3.4 L364.6 0.0 L367.0 3.4 L369.3 0.0 L371.7 3.4 L374.0 0.0 L376.3 3.4 L378.7 0.0 L381.0 3.4 L383.3 0.0 L385.7 3.4 L388.0 0.0 L390.4 3.4 L392.7 0.0 L395.0 3.4 L397.4 0.0 L399.7 3.4 L399.7 10.6 L397.4 7.2 L395.0 10.6 L392.7 7.2 L390.4 10.6 L388.0 7.2 L385.7 10.6 L383.3 7.2 L381.0 10.6 L378.7 7.2 L376.3 10.6 L374.0 7.2 L371.7 10.6 L369.3 7.2 L367.0 10.6 L364.6 7.2 L362.3 10.6 L360.0 7.2 L357.6 10.6 L355.3 7.2 L353.0 10.6 L350.6 7.2 L348.3 10.6 L345.9 7.2 L343.6 10.6 L341.3 7.2 L338.9 10.6 L336.6 7.2 L334.3 10.6 L331.9 7.2 L329.6 10.6 L327.2 7.2 L324.9 10.6 L322.6 7.2 L320.2 10.6 L317.9 7.2 L315.6 10.6 L313.2 7.2 L310.9 10.6 L308.6 7.2 L306.2 10.6 L303.9 7.2 L301.5 10.6 L299.2 7.2 L296.9 10.6 L294.5 7.2 L292.2 10.6 L289.8 7.2 L287.5 10.6 L285.2 7.2 L282.8 10.6 L280.5 7.2 L278.2 10.6 L275.8 7.2 L273.5 10.6 L271.1 7.2 L268.8 10.6 L266.5 7.2 L264.1 10.6 L261.8 7.2 L259.5 10.6 L257.1 7.2 L254.8 10.6 L252.4 7.2 L250.1 10.6 L247.8 7.2 L245.4 10.6 L243.1 7.2 L240.8 10.6 L238.4 7.2 L236.1 10.6 L233.8 7.2 L231.4 10.6 L229.1 7.2 L226.7 10.6 L224.4 7.2 L222.1 10.6 L219.7 7.2 L217.4 10.6 L215.0 7.2 L212.7 10.6 L210.4 7.2 L208.0 10.6 L205.7 7.2 L203.4 10.6 L201.0 7.2 L198.7 10.6 L196.3 7.2 L194.0 10.6 L191.7 7.2 L189.3 10.6 L187.0 7.2 L184.7 10.6 L182.3 7.2 L180.0 10.6 L177.7 7.2 L175.3 10.6 L173.0 7.2 L170.6 10.6 L168.3 7.2 L166.0 10.6 L163.6 7.2 L161.3 10.6 L158.9 7.2 L156.6 10.6 L154.3 7.2 L151.9 10.6 L149.6 7.2 L147.3 10.6 L144.9 7.2 L142.6 10.6 L140.2 7.2 L137.9 10.6 L135.6 7.2 L133.2 10.6 L130.9 7.2 L128.6 10.6 L126.2 7.2 L123.9 10.6 L121.5 7.2 L119.2 10.6 L116.9 7.2 L114.5 10.6 L112.2 7.2 L109.9 10.6 L107.5 7.2 L105.2 10.6 L102.8 7.2 L100.5 10.6 L98.2 7.2 L95.8 10.6 L93.5 7.2 L91.2 10.6 L88.8 7.2 L86.5 10.6 L84.1 7.2 L81.8 10.6 L79.5 7.2 L77.1 10.6 L74.8 7.2 L72.5 10.6 L70.1 7.2 L67.8 10.6 L65.5 7.2 L63.1 10.6 L60.8 7.2 L58.4 10.6 L56.1 7.2 L53.8 10.6 L51.4 7.2 L49.1 10.6 L46.8 7.2 L44.4 10.6 L42.1 7.2 L39.7 10.6 L37.4 7.2 L35.1 10.6 L32.7 7.2 L30.4 10.6 L28.0 7.2 L25.7 10.6 L23.4 7.2 L21.0 10.6 L18.7 7.2 L16.4 10.6 L14.0 7.2 L11.7 10.6 L9.3 7.2 L7.0 10.6 L4.7 7.2 L2.3 10.6 L0.0 7.2Z"/><path id="bW" d="M0.0 0.0 L2.3 3.4 L4.7 0.0 L7.0 3.4 L9.3 0.0 L11.7 3.4 L14.0 0.0 L16.4 3.4 L18.7 0.0 L21.0 3.4 L23.4 0.0 L25.7 3.4 L28.0 0.0 L30.4 3.4 L32.7 0.0 L35.1 3.4 L37.4 0.0 L39.7 3.4 L42.1 0.0 L44.4 3.4 L46.8 0.0 L49.1 3.4 L51.4 0.0 L53.8 3.4 L56.1 0.0 L58.4 3.4 L60.8 0.0 L63.1 3.4 L65.5 0.0 L67.8 3.4 L70.1 0.0 L72.5 3.4 L74.8 0.0 L77.1 3.4 L79.5 0.0 L81.8 3.4 L84.1 0.0 L86.5 3.4 L88.8 0.0 L91.2 3.4 L93.5 0.0 L95.8 3.4 L98.2 0.0 L100.5 3.4 L102.8 0.0 L105.2 3.4 L107.5 0.0 L109.9 3.4 L112.2 0.0 L114.5 3.4 L116.9 0.0 L119.2 3.4 L121.5 0.0 L123.9 3.4 L126.2 0.0 L128.6 3.4 L130.9 0.0 L133.2 3.4 L135.6 0.0 L137.9 3.4 L140.2 0.0 L142.6 3.4 L144.9 0.0 L147.3 3.4 L149.6 0.0 L151.9 3.4 L154.3 0.0 L156.6 3.4 L158.9 0.0 L161.3 3.4 L163.6 0.0 L166.0 3.4 L168.3 0.0 L170.6 3.4 L173.0 0.0 L175.3 3.4 L177.7 0.0 L180.0 3.4 L182.3 0.0 L184.7 3.4 L187.0 0.0 L189.3 3.4 L191.7 0.0 L194.0 3.4 L196.3 0.0 L198.7 3.4 L201.0 0.0 L203.4 3.4 L205.7 0.0 L208.0 3.4 L210.4 0.0 L212.7 3.4 L215.0 0.0 L217.4 3.4 L219.7 0.0 L222.1 3.4 L224.4 0.0 L226.7 3.4 L229.1 0.0 L231.4 3.4 L233.8 0.0 L236.1 3.4 L238.4 0.0 L240.8 3.4 L243.1 0.0 L245.4 3.4 L247.8 0.0 L250.1 3.4 L252.4 0.0 L254.8 3.4 L257.1 0.0 L259.5 3.4 L261.8 0.0 L264.1 3.4 L266.5 0.0 L268.8 3.4 L271.1 0.0 L273.5 3.4 L275.8 0.0 L278.2 3.4 L280.5 0.0 L282.8 3.4 L285.2 0.0 L287.5 3.4 L289.8 0.0 L292.2 3.4 L294.5 0.0 L296.9 3.4 L299.2 0.0 L301.5 3.4 L303.9 0.0 L306.2 3.4 L308.6 0.0 L310.9 3.4 L313.2 0.0 L315.6 3.4 L317.9 0.0 L320.2 3.4 L322.6 0.0 L324.9 3.4 L327.2 0.0 L329.6 3.4 L331.9 0.0 L334.3 3.4 L336.6 0.0 L338.9 3.4 L341.3 0.0 L343.6 3.4 L345.9 0.0 L348.3 3.4 L350.6 0.0 L353.0 3.4 L355.3 0.0 L357.6 3.4 L360.0 0.0 L362.3 3.4 L364.6 0.0 L367.0 3.4 L369.3 0.0 L371.7 3.4 L374.0 0.0 L376.3 3.4 L378.7 0.0 L381.0 3.4 L383.3 0.0 L385.7 3.4 L388.0 0.0 L390.4 3.4 L392.7 0.0 L395.0 3.4 L397.4 0.0 L399.7 3.4 L399.7 14.6 L397.4 11.2 L395.0 14.6 L392.7 11.2 L390.4 14.6 L388.0 11.2 L385.7 14.6 L383.3 11.2 L381.0 14.6 L378.7 11.2 L376.3 14.6 L374.0 11.2 L371.7 14.6 L369.3 11.2 L367.0 14.6 L364.6 11.2 L362.3 14.6 L360.0 11.2 L357.6 14.6 L355.3 11.2 L353.0 14.6 L350.6 11.2 L348.3 14.6 L345.9 11.2 L343.6 14.6 L341.3 11.2 L338.9 14.6 L336.6 11.2 L334.3 14.6 L331.9 11.2 L329.6 14.6 L327.2 11.2 L324.9 14.6 L322.6 11.2 L320.2 14.6 L317.9 11.2 L315.6 14.6 L313.2 11.2 L310.9 14.6 L308.6 11.2 L306.2 14.6 L303.9 11.2 L301.5 14.6 L299.2 11.2 L296.9 14.6 L294.5 11.2 L292.2 14.6 L289.8 11.2 L287.5 14.6 L285.2 11.2 L282.8 14.6 L280.5 11.2 L278.2 14.6 L275.8 11.2 L273.5 14.6 L271.1 11.2 L268.8 14.6 L266.5 11.2 L264.1 14.6 L261.8 11.2 L259.5 14.6 L257.1 11.2 L254.8 14.6 L252.4 11.2 L250.1 14.6 L247.8 11.2 L245.4 14.6 L243.1 11.2 L240.8 14.6 L238.4 11.2 L236.1 14.6 L233.8 11.2 L231.4 14.6 L229.1 11.2 L226.7 14.6 L224.4 11.2 L222.1 14.6 L219.7 11.2 L217.4 14.6 L215.0 11.2 L212.7 14.6 L210.4 11.2 L208.0 14.6 L205.7 11.2 L203.4 14.6 L201.0 11.2 L198.7 14.6 L196.3 11.2 L194.0 14.6 L191.7 11.2 L189.3 14.6 L187.0 11.2 L184.7 14.6 L182.3 11.2 L180.0 14.6 L177.7 11.2 L175.3 14.6 L173.0 11.2 L170.6 14.6 L168.3 11.2 L166.0 14.6 L163.6 11.2 L161.3 14.6 L158.9 11.2 L156.6 14.6 L154.3 11.2 L151.9 14.6 L149.6 11.2 L147.3 14.6 L144.9 11.2 L142.6 14.6 L140.2 11.2 L137.9 14.6 L135.6 11.2 L133.2 14.6 L130.9 11.2 L128.6 14.6 L126.2 11.2 L123.9 14.6 L121.5 11.2 L119.2 14.6 L116.9 11.2 L114.5 14.6 L112.2 11.2 L109.9 14.6 L107.5 11.2 L105.2 14.6 L102.8 11.2 L100.5 14.6 L98.2 11.2 L95.8 14.6 L93.5 11.2 L91.2 14.6 L88.8 11.2 L86.5 14.6 L84.1 11.2 L81.8 14.6 L79.5 11.2 L77.1 14.6 L74.8 11.2 L72.5 14.6 L70.1 11.2 L67.8 14.6 L65.5 11.2 L63.1 14.6 L60.8 11.2 L58.4 14.6 L56.1 11.2 L53.8 14.6 L51.4 11.2 L49.1 14.6 L46.8 11.2 L44.4 14.6 L42.1 11.2 L39.7 14.6 L37.4 11.2 L35.1 14.6 L32.7 11.2 L30.4 14.6 L28.0 11.2 L25.7 14.6 L23.4 11.2 L21.0 14.6 L18.7 11.2 L16.4 14.6 L14.0 11.2 L11.7 14.6 L9.3 11.2 L7.0 14.6 L4.7 11.2 L2.3 14.6 L0.0 11.2Z"/><path id="bB" d="M0.0 0.0 L2.3 3.4 L4.7 0.0 L7.0 3.4 L9.3 0.0 L11.7 3.4 L14.0 0.0 L16.4 3.4 L18.7 0.0 L21.0 3.4 L23.4 0.0 L25.7 3.4 L28.0 0.0 L30.4 3.4 L32.7 0.0 L35.1 3.4 L37.4 0.0 L39.7 3.4 L42.1 0.0 L44.4 3.4 L46.8 0.0 L49.1 3.4 L51.4 0.0 L53.8 3.4 L56.1 0.0 L58.4 3.4 L60.8 0.0 L63.1 3.4 L65.5 0.0 L67.8 3.4 L70.1 0.0 L72.5 3.4 L74.8 0.0 L77.1 3.4 L79.5 0.0 L81.8 3.4 L84.1 0.0 L86.5 3.4 L88.8 0.0 L91.2 3.4 L93.5 0.0 L95.8 3.4 L98.2 0.0 L100.5 3.4 L102.8 0.0 L105.2 3.4 L107.5 0.0 L109.9 3.4 L112.2 0.0 L114.5 3.4 L116.9 0.0 L119.2 3.4 L121.5 0.0 L123.9 3.4 L126.2 0.0 L128.6 3.4 L130.9 0.0 L133.2 3.4 L135.6 0.0 L137.9 3.4 L140.2 0.0 L142.6 3.4 L144.9 0.0 L147.3 3.4 L149.6 0.0 L151.9 3.4 L154.3 0.0 L156.6 3.4 L158.9 0.0 L161.3 3.4 L163.6 0.0 L166.0 3.4 L168.3 0.0 L170.6 3.4 L173.0 0.0 L175.3 3.4 L177.7 0.0 L180.0 3.4 L182.3 0.0 L184.7 3.4 L187.0 0.0 L189.3 3.4 L191.7 0.0 L194.0 3.4 L196.3 0.0 L198.7 3.4 L201.0 0.0 L203.4 3.4 L205.7 0.0 L208.0 3.4 L210.4 0.0 L212.7 3.4 L215.0 0.0 L217.4 3.4 L219.7 0.0 L222.1 3.4 L224.4 0.0 L226.7 3.4 L229.1 0.0 L231.4 3.4 L233.8 0.0 L236.1 3.4 L238.4 0.0 L240.8 3.4 L243.1 0.0 L245.4 3.4 L247.8 0.0 L250.1 3.4 L252.4 0.0 L254.8 3.4 L257.1 0.0 L259.5 3.4 L261.8 0.0 L264.1 3.4 L266.5 0.0 L268.8 3.4 L271.1 0.0 L273.5 3.4 L275.8 0.0 L278.2 3.4 L280.5 0.0 L282.8 3.4 L285.2 0.0 L287.5 3.4 L289.8 0.0 L292.2 3.4 L294.5 0.0 L296.9 3.4 L299.2 0.0 L301.5 3.4 L303.9 0.0 L306.2 3.4 L308.6 0.0 L310.9 3.4 L313.2 0.0 L315.6 3.4 L317.9 0.0 L320.2 3.4 L322.6 0.0 L324.9 3.4 L327.2 0.0 L329.6 3.4 L331.9 0.0 L334.3 3.4 L336.6 0.0 L338.9 3.4 L341.3 0.0 L343.6 3.4 L345.9 0.0 L348.3 3.4 L350.6 0.0 L353.0 3.4 L355.3 0.0 L357.6 3.4 L360.0 0.0 L362.3 3.4 L364.6 0.0 L367.0 3.4 L369.3 0.0 L371.7 3.4 L374.0 0.0 L376.3 3.4 L378.7 0.0 L381.0 3.4 L383.3 0.0 L385.7 3.4 L388.0 0.0 L390.4 3.4 L392.7 0.0 L395.0 3.4 L397.4 0.0 L399.7 3.4 L399.7 14.2 L397.4 10.8 L395.0 14.2 L392.7 10.8 L390.4 14.2 L388.0 10.8 L385.7 14.2 L383.3 10.8 L381.0 14.2 L378.7 10.8 L376.3 14.2 L374.0 10.8 L371.7 14.2 L369.3 10.8 L367.0 14.2 L364.6 10.8 L362.3 14.2 L360.0 10.8 L357.6 14.2 L355.3 10.8 L353.0 14.2 L350.6 10.8 L348.3 14.2 L345.9 10.8 L343.6 14.2 L341.3 10.8 L338.9 14.2 L336.6 10.8 L334.3 14.2 L331.9 10.8 L329.6 14.2 L327.2 10.8 L324.9 14.2 L322.6 10.8 L320.2 14.2 L317.9 10.8 L315.6 14.2 L313.2 10.8 L310.9 14.2 L308.6 10.8 L306.2 14.2 L303.9 10.8 L301.5 14.2 L299.2 10.8 L296.9 14.2 L294.5 10.8 L292.2 14.2 L289.8 10.8 L287.5 14.2 L285.2 10.8 L282.8 14.2 L280.5 10.8 L278.2 14.2 L275.8 10.8 L273.5 14.2 L271.1 10.8 L268.8 14.2 L266.5 10.8 L264.1 14.2 L261.8 10.8 L259.5 14.2 L257.1 10.8 L254.8 14.2 L252.4 10.8 L250.1 14.2 L247.8 10.8 L245.4 14.2 L243.1 10.8 L240.8 14.2 L238.4 10.8 L236.1 14.2 L233.8 10.8 L231.4 14.2 L229.1 10.8 L226.7 14.2 L224.4 10.8 L222.1 14.2 L219.7 10.8 L217.4 14.2 L215.0 10.8 L212.7 14.2 L210.4 10.8 L208.0 14.2 L205.7 10.8 L203.4 14.2 L201.0 10.8 L198.7 14.2 L196.3 10.8 L194.0 14.2 L191.7 10.8 L189.3 14.2 L187.0 10.8 L184.7 14.2 L182.3 10.8 L180.0 14.2 L177.7 10.8 L175.3 14.2 L173.0 10.8 L170.6 14.2 L168.3 10.8 L166.0 14.2 L163.6 10.8 L161.3 14.2 L158.9 10.8 L156.6 14.2 L154.3 10.8 L151.9 14.2 L149.6 10.8 L147.3 14.2 L144.9 10.8 L142.6 14.2 L140.2 10.8 L137.9 14.2 L135.6 10.8 L133.2 14.2 L130.9 10.8 L128.6 14.2 L126.2 10.8 L123.9 14.2 L121.5 10.8 L119.2 14.2 L116.9 10.8 L114.5 14.2 L112.2 10.8 L109.9 14.2 L107.5 10.8 L105.2 14.2 L102.8 10.8 L100.5 14.2 L98.2 10.8 L95.8 14.2 L93.5 10.8 L91.2 14.2 L88.8 10.8 L86.5 14.2 L84.1 10.8 L81.8 14.2 L79.5 10.8 L77.1 14.2 L74.8 10.8 L72.5 14.2 L70.1 10.8 L67.8 14.2 L65.5 10.8 L63.1 14.2 L60.8 10.8 L58.4 14.2 L56.1 10.8 L53.8 14.2 L51.4 10.8 L49.1 14.2 L46.8 10.8 L44.4 14.2 L42.1 10.8 L39.7 14.2 L37.4 10.8 L35.1 14.2 L32.7 10.8 L30.4 14.2 L28.0 10.8 L25.7 14.2 L23.4 10.8 L21.0 14.2 L18.7 10.8 L16.4 14.2 L14.0 10.8 L11.7 14.2 L9.3 10.8 L7.0 14.2 L4.7 10.8 L2.3 14.2 L0.0 10.8Z"/><path id="kW" d="M0.0 4.4 L2.3 -0.4 L4.7 4.4 L7.0 -0.4 L9.3 4.4 L11.7 -0.4 L14.0 4.4 L16.4 -0.4 L18.7 4.4 L21.0 -0.4 L23.4 4.4 L25.7 -0.4 L28.0 4.4 L30.4 -0.4 L32.7 4.4 L35.1 -0.4 L37.4 4.4 L39.7 -0.4 L42.1 4.4 L44.4 -0.4 L46.8 4.4 L49.1 -0.4 L51.4 4.4 L53.8 -0.4 L56.1 4.4 L58.4 -0.4 L60.8 4.4 L63.1 -0.4 L65.5 4.4 L67.8 -0.4 L70.1 4.4 L72.5 -0.4 L74.8 4.4 L77.1 -0.4 L79.5 4.4 L81.8 -0.4 L84.1 4.4 L86.5 -0.4 L88.8 4.4 L91.2 -0.4 L93.5 4.4 L95.8 -0.4 L98.2 4.4 L100.5 -0.4 L102.8 4.4 L105.2 -0.4 L107.5 4.4 L109.9 -0.4 L112.2 4.4 L114.5 -0.4 L116.9 4.4 L119.2 -0.4 L121.5 4.4 L123.9 -0.4 L126.2 4.4 L128.6 -0.4 L130.9 4.4 L133.2 -0.4 L135.6 4.4 L137.9 -0.4 L140.2 4.4 L142.6 -0.4 L144.9 4.4 L147.3 -0.4 L149.6 4.4 L151.9 -0.4 L154.3 4.4 L156.6 -0.4 L158.9 4.4 L161.3 -0.4 L163.6 4.4 L166.0 -0.4 L168.3 4.4 L170.6 -0.4 L173.0 4.4 L175.3 -0.4 L177.7 4.4 L180.0 -0.4 L182.3 4.4 L184.7 -0.4 L187.0 4.4 L189.3 -0.4 L191.7 4.4 L194.0 -0.4 L196.3 4.4 L198.7 -0.4 L201.0 4.4 L203.4 -0.4 L205.7 4.4 L208.0 -0.4 L210.4 4.4 L212.7 -0.4 L215.0 4.4 L217.4 -0.4 L219.7 4.4 L222.1 -0.4 L224.4 4.4 L226.7 -0.4 L229.1 4.4 L231.4 -0.4 L233.8 4.4 L236.1 -0.4 L238.4 4.4 L240.8 -0.4 L243.1 4.4 L245.4 -0.4 L247.8 4.4 L250.1 -0.4 L252.4 4.4 L254.8 -0.4 L257.1 4.4 L259.5 -0.4 L261.8 4.4 L264.1 -0.4 L266.5 4.4 L268.8 -0.4 L271.1 4.4 L273.5 -0.4 L275.8 4.4 L278.2 -0.4 L280.5 4.4 L282.8 -0.4 L285.2 4.4 L287.5 -0.4 L289.8 4.4 L292.2 -0.4 L294.5 4.4 L296.9 -0.4 L299.2 4.4 L301.5 -0.4 L303.9 4.4 L306.2 -0.4 L308.6 4.4 L310.9 -0.4 L313.2 4.4 L315.6 -0.4 L317.9 4.4 L320.2 -0.4 L322.6 4.4 L324.9 -0.4 L327.2 4.4 L329.6 -0.4 L331.9 4.4 L334.3 -0.4 L336.6 4.4 L338.9 -0.4 L341.3 4.4 L343.6 -0.4 L345.9 4.4 L348.3 -0.4 L350.6 4.4 L353.0 -0.4 L355.3 4.4 L357.6 -0.4 L360.0 4.4 L362.3 -0.4 L364.6 4.4 L367.0 -0.4 L369.3 4.4 L371.7 -0.4 L374.0 4.4 L376.3 -0.4 L378.7 4.4 L381.0 -0.4 L383.3 4.4 L385.7 -0.4 L388.0 4.4 L390.4 -0.4 L392.7 4.4 L395.0 -0.4 L397.4 4.4 L399.7 -0.4 L399.7 13.8 L397.4 9.2 L395.0 13.8 L392.7 9.2 L390.4 13.8 L388.0 9.2 L385.7 13.8 L383.3 9.2 L381.0 13.8 L378.7 9.2 L376.3 13.8 L374.0 9.2 L371.7 13.8 L369.3 9.2 L367.0 13.8 L364.6 9.2 L362.3 13.8 L360.0 9.2 L357.6 13.8 L355.3 9.2 L353.0 13.8 L350.6 9.2 L348.3 13.8 L345.9 9.2 L343.6 13.8 L341.3 9.2 L338.9 13.8 L336.6 9.2 L334.3 13.8 L331.9 9.2 L329.6 13.8 L327.2 9.2 L324.9 13.8 L322.6 9.2 L320.2 13.8 L317.9 9.2 L315.6 13.8 L313.2 9.2 L310.9 13.8 L308.6 9.2 L306.2 13.8 L303.9 9.2 L301.5 13.8 L299.2 9.2 L296.9 13.8 L294.5 9.2 L292.2 13.8 L289.8 9.2 L287.5 13.8 L285.2 9.2 L282.8 13.8 L280.5 9.2 L278.2 13.8 L275.8 9.2 L273.5 13.8 L271.1 9.2 L268.8 13.8 L266.5 9.2 L264.1 13.8 L261.8 9.2 L259.5 13.8 L257.1 9.2 L254.8 13.8 L252.4 9.2 L250.1 13.8 L247.8 9.2 L245.4 13.8 L243.1 9.2 L240.8 13.8 L238.4 9.2 L236.1 13.8 L233.8 9.2 L231.4 13.8 L229.1 9.2 L226.7 13.8 L224.4 9.2 L222.1 13.8 L219.7 9.2 L217.4 13.8 L215.0 9.2 L212.7 13.8 L210.4 9.2 L208.0 13.8 L205.7 9.2 L203.4 13.8 L201.0 9.2 L198.7 13.8 L196.3 9.2 L194.0 13.8 L191.7 9.2 L189.3 13.8 L187.0 9.2 L184.7 13.8 L182.3 9.2 L180.0 13.8 L177.7 9.2 L175.3 13.8 L173.0 9.2 L170.6 13.8 L168.3 9.2 L166.0 13.8 L163.6 9.2 L161.3 13.8 L158.9 9.2 L156.6 13.8 L154.3 9.2 L151.9 13.8 L149.6 9.2 L147.3 13.8 L144.9 9.2 L142.6 13.8 L140.2 9.2 L137.9 13.8 L135.6 9.2 L133.2 13.8 L130.9 9.2 L128.6 13.8 L126.2 9.2 L123.9 13.8 L121.5 9.2 L119.2 13.8 L116.9 9.2 L114.5 13.8 L112.2 9.2 L109.9 13.8 L107.5 9.2 L105.2 13.8 L102.8 9.2 L100.5 13.8 L98.2 9.2 L95.8 13.8 L93.5 9.2 L91.2 13.8 L88.8 9.2 L86.5 13.8 L84.1 9.2 L81.8 13.8 L79.5 9.2 L77.1 13.8 L74.8 9.2 L72.5 13.8 L70.1 9.2 L67.8 13.8 L65.5 9.2 L63.1 13.8 L60.8 9.2 L58.4 13.8 L56.1 9.2 L53.8 13.8 L51.4 9.2 L49.1 13.8 L46.8 9.2 L44.4 13.8 L42.1 9.2 L39.7 13.8 L37.4 9.2 L35.1 13.8 L32.7 9.2 L30.4 13.8 L28.0 9.2 L25.7 13.8 L23.4 9.2 L21.0 13.8 L18.7 9.2 L16.4 13.8 L14.0 9.2 L11.7 13.8 L9.3 9.2 L7.0 13.8 L4.7 9.2 L2.3 13.8 L0.0 9.2Z"/><path id="kB" d="M0.0 4.3 L2.3 -0.4 L4.7 4.3 L7.0 -0.4 L9.3 4.3 L11.7 -0.4 L14.0 4.3 L16.4 -0.4 L18.7 4.3 L21.0 -0.4 L23.4 4.3 L25.7 -0.4 L28.0 4.3 L30.4 -0.4 L32.7 4.3 L35.1 -0.4 L37.4 4.3 L39.7 -0.4 L42.1 4.3 L44.4 -0.4 L46.8 4.3 L49.1 -0.4 L51.4 4.3 L53.8 -0.4 L56.1 4.3 L58.4 -0.4 L60.8 4.3 L63.1 -0.4 L65.5 4.3 L67.8 -0.4 L70.1 4.3 L72.5 -0.4 L74.8 4.3 L77.1 -0.4 L79.5 4.3 L81.8 -0.4 L84.1 4.3 L86.5 -0.4 L88.8 4.3 L91.2 -0.4 L93.5 4.3 L95.8 -0.4 L98.2 4.3 L100.5 -0.4 L102.8 4.3 L105.2 -0.4 L107.5 4.3 L109.9 -0.4 L112.2 4.3 L114.5 -0.4 L116.9 4.3 L119.2 -0.4 L121.5 4.3 L123.9 -0.4 L126.2 4.3 L128.6 -0.4 L130.9 4.3 L133.2 -0.4 L135.6 4.3 L137.9 -0.4 L140.2 4.3 L142.6 -0.4 L144.9 4.3 L147.3 -0.4 L149.6 4.3 L151.9 -0.4 L154.3 4.3 L156.6 -0.4 L158.9 4.3 L161.3 -0.4 L163.6 4.3 L166.0 -0.4 L168.3 4.3 L170.6 -0.4 L173.0 4.3 L175.3 -0.4 L177.7 4.3 L180.0 -0.4 L182.3 4.3 L184.7 -0.4 L187.0 4.3 L189.3 -0.4 L191.7 4.3 L194.0 -0.4 L196.3 4.3 L198.7 -0.4 L201.0 4.3 L203.4 -0.4 L205.7 4.3 L208.0 -0.4 L210.4 4.3 L212.7 -0.4 L215.0 4.3 L217.4 -0.4 L219.7 4.3 L222.1 -0.4 L224.4 4.3 L226.7 -0.4 L229.1 4.3 L231.4 -0.4 L233.8 4.3 L236.1 -0.4 L238.4 4.3 L240.8 -0.4 L243.1 4.3 L245.4 -0.4 L247.8 4.3 L250.1 -0.4 L252.4 4.3 L254.8 -0.4 L257.1 4.3 L259.5 -0.4 L261.8 4.3 L264.1 -0.4 L266.5 4.3 L268.8 -0.4 L271.1 4.3 L273.5 -0.4 L275.8 4.3 L278.2 -0.4 L280.5 4.3 L282.8 -0.4 L285.2 4.3 L287.5 -0.4 L289.8 4.3 L292.2 -0.4 L294.5 4.3 L296.9 -0.4 L299.2 4.3 L301.5 -0.4 L303.9 4.3 L306.2 -0.4 L308.6 4.3 L310.9 -0.4 L313.2 4.3 L315.6 -0.4 L317.9 4.3 L320.2 -0.4 L322.6 4.3 L324.9 -0.4 L327.2 4.3 L329.6 -0.4 L331.9 4.3 L334.3 -0.4 L336.6 4.3 L338.9 -0.4 L341.3 4.3 L343.6 -0.4 L345.9 4.3 L348.3 -0.4 L350.6 4.3 L353.0 -0.4 L355.3 4.3 L357.6 -0.4 L360.0 4.3 L362.3 -0.4 L364.6 4.3 L367.0 -0.4 L369.3 4.3 L371.7 -0.4 L374.0 4.3 L376.3 -0.4 L378.7 4.3 L381.0 -0.4 L383.3 4.3 L385.7 -0.4 L388.0 4.3 L390.4 -0.4 L392.7 4.3 L395.0 -0.4 L397.4 4.3 L399.7 -0.4 L399.7 13.4 L397.4 8.9 L395.0 13.4 L392.7 8.9 L390.4 13.4 L388.0 8.9 L385.7 13.4 L383.3 8.9 L381.0 13.4 L378.7 8.9 L376.3 13.4 L374.0 8.9 L371.7 13.4 L369.3 8.9 L367.0 13.4 L364.6 8.9 L362.3 13.4 L360.0 8.9 L357.6 13.4 L355.3 8.9 L353.0 13.4 L350.6 8.9 L348.3 13.4 L345.9 8.9 L343.6 13.4 L341.3 8.9 L338.9 13.4 L336.6 8.9 L334.3 13.4 L331.9 8.9 L329.6 13.4 L327.2 8.9 L324.9 13.4 L322.6 8.9 L320.2 13.4 L317.9 8.9 L315.6 13.4 L313.2 8.9 L310.9 13.4 L308.6 8.9 L306.2 13.4 L303.9 8.9 L301.5 13.4 L299.2 8.9 L296.9 13.4 L294.5 8.9 L292.2 13.4 L289.8 8.9 L287.5 13.4 L285.2 8.9 L282.8 13.4 L280.5 8.9 L278.2 13.4 L275.8 8.9 L273.5 13.4 L271.1 8.9 L268.8 13.4 L266.5 8.9 L264.1 13.4 L261.8 8.9 L259.5 13.4 L257.1 8.9 L254.8 13.4 L252.4 8.9 L250.1 13.4 L247.8 8.9 L245.4 13.4 L243.1 8.9 L240.8 13.4 L238.4 8.9 L236.1 13.4 L233.8 8.9 L231.4 13.4 L229.1 8.9 L226.7 13.4 L224.4 8.9 L222.1 13.4 L219.7 8.9 L217.4 13.4 L215.0 8.9 L212.7 13.4 L210.4 8.9 L208.0 13.4 L205.7 8.9 L203.4 13.4 L201.0 8.9 L198.7 13.4 L196.3 8.9 L194.0 13.4 L191.7 8.9 L189.3 13.4 L187.0 8.9 L184.7 13.4 L182.3 8.9 L180.0 13.4 L177.7 8.9 L175.3 13.4 L173.0 8.9 L170.6 13.4 L168.3 8.9 L166.0 13.4 L163.6 8.9 L161.3 13.4 L158.9 8.9 L156.6 13.4 L154.3 8.9 L151.9 13.4 L149.6 8.9 L147.3 13.4 L144.9 8.9 L142.6 13.4 L140.2 8.9 L137.9 13.4 L135.6 8.9 L133.2 13.4 L130.9 8.9 L128.6 13.4 L126.2 8.9 L123.9 13.4 L121.5 8.9 L119.2 13.4 L116.9 8.9 L114.5 13.4 L112.2 8.9 L109.9 13.4 L107.5 8.9 L105.2 13.4 L102.8 8.9 L100.5 13.4 L98.2 8.9 L95.8 13.4 L93.5 8.9 L91.2 13.4 L88.8 8.9 L86.5 13.4 L84.1 8.9 L81.8 13.4 L79.5 8.9 L77.1 13.4 L74.8 8.9 L72.5 13.4 L70.1 8.9 L67.8 13.4 L65.5 8.9 L63.1 13.4 L60.8 8.9 L58.4 13.4 L56.1 8.9 L53.8 13.4 L51.4 8.9 L49.1 13.4 L46.8 8.9 L44.4 13.4 L42.1 8.9 L39.7 13.4 L37.4 8.9 L35.1 13.4 L32.7 8.9 L30.4 13.4 L28.0 8.9 L25.7 13.4 L23.4 8.9 L21.0 13.4 L18.7 8.9 L16.4 13.4 L14.0 8.9 L11.7 13.4 L9.3 8.9 L7.0 13.4 L4.7 8.9 L2.3 13.4 L0.0 8.9Z"/><path id="kT" d="M0.0 2.8 L2.3 -0.4 L4.7 2.8 L7.0 -0.4 L9.3 2.8 L11.7 -0.4 L14.0 2.8 L16.4 -0.4 L18.7 2.8 L21.0 -0.4 L23.4 2.8 L25.7 -0.4 L28.0 2.8 L30.4 -0.4 L32.7 2.8 L35.1 -0.4 L37.4 2.8 L39.7 -0.4 L42.1 2.8 L44.4 -0.4 L46.8 2.8 L49.1 -0.4 L51.4 2.8 L53.8 -0.4 L56.1 2.8 L58.4 -0.4 L60.8 2.8 L63.1 -0.4 L65.5 2.8 L67.8 -0.4 L70.1 2.8 L72.5 -0.4 L74.8 2.8 L77.1 -0.4 L79.5 2.8 L81.8 -0.4 L84.1 2.8 L86.5 -0.4 L88.8 2.8 L91.2 -0.4 L93.5 2.8 L95.8 -0.4 L98.2 2.8 L100.5 -0.4 L102.8 2.8 L105.2 -0.4 L107.5 2.8 L109.9 -0.4 L112.2 2.8 L114.5 -0.4 L116.9 2.8 L119.2 -0.4 L121.5 2.8 L123.9 -0.4 L126.2 2.8 L128.6 -0.4 L130.9 2.8 L133.2 -0.4 L135.6 2.8 L137.9 -0.4 L140.2 2.8 L142.6 -0.4 L144.9 2.8 L147.3 -0.4 L149.6 2.8 L151.9 -0.4 L154.3 2.8 L156.6 -0.4 L158.9 2.8 L161.3 -0.4 L163.6 2.8 L166.0 -0.4 L168.3 2.8 L170.6 -0.4 L173.0 2.8 L175.3 -0.4 L177.7 2.8 L180.0 -0.4 L182.3 2.8 L184.7 -0.4 L187.0 2.8 L189.3 -0.4 L191.7 2.8 L194.0 -0.4 L196.3 2.8 L198.7 -0.4 L201.0 2.8 L203.4 -0.4 L205.7 2.8 L208.0 -0.4 L210.4 2.8 L212.7 -0.4 L215.0 2.8 L217.4 -0.4 L219.7 2.8 L222.1 -0.4 L224.4 2.8 L226.7 -0.4 L229.1 2.8 L231.4 -0.4 L233.8 2.8 L236.1 -0.4 L238.4 2.8 L240.8 -0.4 L243.1 2.8 L245.4 -0.4 L247.8 2.8 L250.1 -0.4 L252.4 2.8 L254.8 -0.4 L257.1 2.8 L259.5 -0.4 L261.8 2.8 L264.1 -0.4 L266.5 2.8 L268.8 -0.4 L271.1 2.8 L273.5 -0.4 L275.8 2.8 L278.2 -0.4 L280.5 2.8 L282.8 -0.4 L285.2 2.8 L287.5 -0.4 L289.8 2.8 L292.2 -0.4 L294.5 2.8 L296.9 -0.4 L299.2 2.8 L301.5 -0.4 L303.9 2.8 L306.2 -0.4 L308.6 2.8 L310.9 -0.4 L313.2 2.8 L315.6 -0.4 L317.9 2.8 L320.2 -0.4 L322.6 2.8 L324.9 -0.4 L327.2 2.8 L329.6 -0.4 L331.9 2.8 L334.3 -0.4 L336.6 2.8 L338.9 -0.4 L341.3 2.8 L343.6 -0.4 L345.9 2.8 L348.3 -0.4 L350.6 2.8 L353.0 -0.4 L355.3 2.8 L357.6 -0.4 L360.0 2.8 L362.3 -0.4 L364.6 2.8 L367.0 -0.4 L369.3 2.8 L371.7 -0.4 L374.0 2.8 L376.3 -0.4 L378.7 2.8 L381.0 -0.4 L383.3 2.8 L385.7 -0.4 L388.0 2.8 L390.4 -0.4 L392.7 2.8 L395.0 -0.4 L397.4 2.8 L399.7 -0.4 L399.7 9.8 L397.4 6.8 L395.0 9.8 L392.7 6.8 L390.4 9.8 L388.0 6.8 L385.7 9.8 L383.3 6.8 L381.0 9.8 L378.7 6.8 L376.3 9.8 L374.0 6.8 L371.7 9.8 L369.3 6.8 L367.0 9.8 L364.6 6.8 L362.3 9.8 L360.0 6.8 L357.6 9.8 L355.3 6.8 L353.0 9.8 L350.6 6.8 L348.3 9.8 L345.9 6.8 L343.6 9.8 L341.3 6.8 L338.9 9.8 L336.6 6.8 L334.3 9.8 L331.9 6.8 L329.6 9.8 L327.2 6.8 L324.9 9.8 L322.6 6.8 L320.2 9.8 L317.9 6.8 L315.6 9.8 L313.2 6.8 L310.9 9.8 L308.6 6.8 L306.2 9.8 L303.9 6.8 L301.5 9.8 L299.2 6.8 L296.9 9.8 L294.5 6.8 L292.2 9.8 L289.8 6.8 L287.5 9.8 L285.2 6.8 L282.8 9.8 L280.5 6.8 L278.2 9.8 L275.8 6.8 L273.5 9.8 L271.1 6.8 L268.8 9.8 L266.5 6.8 L264.1 9.8 L261.8 6.8 L259.5 9.8 L257.1 6.8 L254.8 9.8 L252.4 6.8 L250.1 9.8 L247.8 6.8 L245.4 9.8 L243.1 6.8 L240.8 9.8 L238.4 6.8 L236.1 9.8 L233.8 6.8 L231.4 9.8 L229.1 6.8 L226.7 9.8 L224.4 6.8 L222.1 9.8 L219.7 6.8 L217.4 9.8 L215.0 6.8 L212.7 9.8 L210.4 6.8 L208.0 9.8 L205.7 6.8 L203.4 9.8 L201.0 6.8 L198.7 9.8 L196.3 6.8 L194.0 9.8 L191.7 6.8 L189.3 9.8 L187.0 6.8 L184.7 9.8 L182.3 6.8 L180.0 9.8 L177.7 6.8 L175.3 9.8 L173.0 6.8 L170.6 9.8 L168.3 6.8 L166.0 9.8 L163.6 6.8 L161.3 9.8 L158.9 6.8 L156.6 9.8 L154.3 6.8 L151.9 9.8 L149.6 6.8 L147.3 9.8 L144.9 6.8 L142.6 9.8 L140.2 6.8 L137.9 9.8 L135.6 6.8 L133.2 9.8 L130.9 6.8 L128.6 9.8 L126.2 6.8 L123.9 9.8 L121.5 6.8 L119.2 9.8 L116.9 6.8 L114.5 9.8 L112.2 6.8 L109.9 9.8 L107.5 6.8 L105.2 9.8 L102.8 6.8 L100.5 9.8 L98.2 6.8 L95.8 9.8 L93.5 6.8 L91.2 9.8 L88.8 6.8 L86.5 9.8 L84.1 6.8 L81.8 9.8 L79.5 6.8 L77.1 9.8 L74.8 6.8 L72.5 9.8 L70.1 6.8 L67.8 9.8 L65.5 6.8 L63.1 9.8 L60.8 6.8 L58.4 9.8 L56.1 6.8 L53.8 9.8 L51.4 6.8 L49.1 9.8 L46.8 6.8 L44.4 9.8 L42.1 6.8 L39.7 9.8 L37.4 6.8 L35.1 9.8 L32.7 6.8 L30.4 9.8 L28.0 6.8 L25.7 9.8 L23.4 6.8 L21.0 9.8 L18.7 6.8 L16.4 9.8 L14.0 6.8 L11.7 9.8 L9.3 6.8 L7.0 9.8 L4.7 6.8 L2.3 9.8 L0.0 6.8Z"/><path id="wT" d="M0.0 1.0 L2.3 7.8 L4.7 1.0 L7.0 7.8 L9.3 1.0 L11.7 7.8 L14.0 1.0 L16.4 7.8 L18.7 1.0 L21.0 7.8 L23.4 1.0 L25.7 7.8 L28.0 1.0 L30.4 7.8 L32.7 1.0 L35.1 7.8 L37.4 1.0 L39.7 7.8 L42.1 1.0 L44.4 7.8 L46.8 1.0 L49.1 7.8 L51.4 1.0 L53.8 7.8 L56.1 1.0 L58.4 7.8 L60.8 1.0 L63.1 7.8 L65.5 1.0 L67.8 7.8 L70.1 1.0 L72.5 7.8 L74.8 1.0 L77.1 7.8 L79.5 1.0 L81.8 7.8 L84.1 1.0 L86.5 7.8 L88.8 1.0 L91.2 7.8 L93.5 1.0 L95.8 7.8 L98.2 1.0 L100.5 7.8 L102.8 1.0 L105.2 7.8 L107.5 1.0 L109.9 7.8 L112.2 1.0 L114.5 7.8 L116.9 1.0 L119.2 7.8 L121.5 1.0 L123.9 7.8 L126.2 1.0 L128.6 7.8 L130.9 1.0 L133.2 7.8 L135.6 1.0 L137.9 7.8 L140.2 1.0 L142.6 7.8 L144.9 1.0 L147.3 7.8 L149.6 1.0 L151.9 7.8 L154.3 1.0 L156.6 7.8 L158.9 1.0 L161.3 7.8 L163.6 1.0 L166.0 7.8 L168.3 1.0 L170.6 7.8 L173.0 1.0 L175.3 7.8 L177.7 1.0 L180.0 7.8 L182.3 1.0 L184.7 7.8 L187.0 1.0 L189.3 7.8 L191.7 1.0 L194.0 7.8 L196.3 1.0 L198.7 7.8 L201.0 1.0 L203.4 7.8 L205.7 1.0 L208.0 7.8 L210.4 1.0 L212.7 7.8 L215.0 1.0 L217.4 7.8 L219.7 1.0 L222.1 7.8 L224.4 1.0 L226.7 7.8 L229.1 1.0 L231.4 7.8 L233.8 1.0 L236.1 7.8 L238.4 1.0 L240.8 7.8 L243.1 1.0 L245.4 7.8 L247.8 1.0 L250.1 7.8 L252.4 1.0 L254.8 7.8 L257.1 1.0 L259.5 7.8 L261.8 1.0 L264.1 7.8 L266.5 1.0 L268.8 7.8 L271.1 1.0 L273.5 7.8 L275.8 1.0 L278.2 7.8 L280.5 1.0 L282.8 7.8 L285.2 1.0 L287.5 7.8 L289.8 1.0 L292.2 7.8 L294.5 1.0 L296.9 7.8 L299.2 1.0 L301.5 7.8 L303.9 1.0 L306.2 7.8 L308.6 1.0 L310.9 7.8 L313.2 1.0 L315.6 7.8 L317.9 1.0 L320.2 7.8 L322.6 1.0 L324.9 7.8 L327.2 1.0 L329.6 7.8 L331.9 1.0 L334.3 7.8 L336.6 1.0 L338.9 7.8 L341.3 1.0 L343.6 7.8 L345.9 1.0 L348.3 7.8 L350.6 1.0 L353.0 7.8 L355.3 1.0 L357.6 7.8 L360.0 1.0 L362.3 7.8 L364.6 1.0 L367.0 7.8 L369.3 1.0 L371.7 7.8 L374.0 1.0 L376.3 7.8 L378.7 1.0 L381.0 7.8 L383.3 1.0 L385.7 7.8 L388.0 1.0 L390.4 7.8 L392.7 1.0 L395.0 7.8 L397.4 1.0 L399.7 7.8" fill="none" stroke-width="1.9" stroke-linejoin="miter"/><pattern id="st" width="4.6750" height="3.5" patternUnits="userSpaceOnUse"><path d="M0 -0.5 L2.34 2.3 L4.67 -0.5" stroke="#1c0a30" stroke-opacity=".10" stroke-width="0.9" fill="none"/><rect x="-0.65" y="0.3" width="1.3" height="1.7" fill="#2a1840" fill-opacity=".4"/><rect x="4.02" y="0.3" width="1.3" height="1.7" fill="#2a1840" fill-opacity=".4"/><rect x="1.54" y="0" width="1.6" height="3.5" fill="#fff" fill-opacity=".06"/></pattern></defs><rect width="395.8" height="397.6" fill="#67134a"/><g clip-path="url(#cAbg)"><rect width="395.8" height="6" fill="#dec6bf"/><use href="#bS1" y="-0.8" fill="#dec6bf"/><use href="#bS2" y="65.4" fill="#67134a"/><use href="#bT" y="17.5" fill="#c0b6c6"/><use href="#bW" y="32.4" fill="#b4abc0"/><use href="#bT" y="50.7" fill="#c0b6c6"/><use href="#kB" y="93.8" fill="#596698"/><use href="#bS1" y="131.0" fill="#dec6bf"/><use href="#bS2" y="197.2" fill="#67134a"/><use href="#bT" y="149.3" fill="#c0b6c6"/><use href="#bW" y="164.2" fill="#b4abc0"/><use href="#bT" y="182.5" fill="#c0b6c6"/><use href="#kB" y="225.6" fill="#596698"/><use href="#bS1" y="262.8" fill="#dec6bf"/><use href="#bS2" y="329.0" fill="#67134a"/><use href="#bT" y="281.1" fill="#c0b6c6"/><use href="#bW" y="296.0" fill="#b4abc0"/><use href="#bT" y="314.3" fill="#c0b6c6"/><use href="#kB" y="357.4" fill="#596698"/><use href="#bS1" y="394.6" fill="#dec6bf"/><use href="#bS2" y="460.8" fill="#67134a"/><use href="#bT" y="412.9" fill="#c0b6c6"/><use href="#bW" y="427.8" fill="#b4abc0"/><use href="#bT" y="446.1" fill="#c0b6c6"/><use href="#kB" y="489.2" fill="#596698"/></g><g clip-path="url(#cBbg)"><rect width="395.8" height="6" fill="#67134a"/><use href="#bS1" y="-0.8" fill="#67134a"/><use href="#bS2" y="65.4" fill="#dec6bf"/><use href="#wT" y="17.5" stroke="#bbaec8"/><use href="#kW" y="32.4" fill="#b5a8c2"/><use href="#wT" y="50.7" stroke="#bbaec8"/><use href="#bB" y="93.8" fill="#ada4c1"/><use href="#bS1" y="131.0" fill="#67134a"/><use href="#bS2" y="197.2" fill="#dec6bf"/><use href="#wT" y="149.3" stroke="#bbaec8"/><use href="#kW" y="164.2" fill="#b5a8c2"/><use href="#wT" y="182.5" stroke="#bbaec8"/><use href="#bB" y="225.6" fill="#ada4c1"/><use href="#bS1" y="262.8" fill="#67134a"/><use href="#bS2" y="329.0" fill="#dec6bf"/><use href="#wT" y="281.1" stroke="#bbaec8"/><use href="#kW" y="296.0" fill="#b5a8c2"/><use href="#wT" y="314.3" stroke="#bbaec8"/><use href="#bB" y="357.4" fill="#ada4c1"/><use href="#bS1" y="394.6" fill="#67134a"/><use href="#bS2" y="460.8" fill="#dec6bf"/><use href="#wT" y="412.9" stroke="#bbaec8"/><use href="#kW" y="427.8" fill="#b5a8c2"/><use href="#wT" y="446.1" stroke="#bbaec8"/><use href="#bB" y="489.2" fill="#ada4c1"/></g><g clip-path="url(#cAs)"><rect width="395.8" height="6" fill="#5b6092"/><use href="#bS1" y="-0.8" fill="#5b6092"/><use href="#bS2" y="65.4" fill="#5b6092"/><use href="#kT" y="17.5" fill="#dac7c7"/><use href="#kW" y="32.4" fill="#d5c1c5"/><use href="#kT" y="50.7" fill="#dac7c7"/><use href="#kB" y="93.8" fill="#bdb5ce"/><use href="#bS1" y="131.0" fill="#5b6092"/><use href="#bS2" y="197.2" fill="#5b6092"/><use href="#kT" y="149.3" fill="#dac7c7"/><use href="#kW" y="164.2" fill="#d5c1c5"/><use href="#kT" y="182.5" fill="#dac7c7"/><use href="#kB" y="225.6" fill="#bdb5ce"/><use href="#bS1" y="262.8" fill="#5b6092"/><use href="#bS2" y="329.0" fill="#5b6092"/><use href="#kT" y="281.1" fill="#dac7c7"/><use href="#kW" y="296.0" fill="#d5c1c5"/><use href="#kT" y="314.3" fill="#dac7c7"/><use href="#kB" y="357.4" fill="#bdb5ce"/><use href="#bS1" y="394.6" fill="#5b6092"/><use href="#bS2" y="460.8" fill="#5b6092"/><use href="#kT" y="412.9" fill="#dac7c7"/><use href="#kW" y="427.8" fill="#d5c1c5"/><use href="#kT" y="446.1" fill="#dac7c7"/><use href="#kB" y="489.2" fill="#bdb5ce"/></g><g clip-path="url(#cBt)"><rect width="395.8" height="6" fill="#5b6092"/><use href="#bS1" y="-0.8" fill="#5b6092"/><use href="#bS2" y="65.4" fill="#5b6092"/><use href="#bB" y="93.8" fill="#666c9f"/><use href="#bS1" y="131.0" fill="#5b6092"/><use href="#bS2" y="197.2" fill="#5b6092"/><use href="#bB" y="225.6" fill="#666c9f"/><use href="#bS1" y="262.8" fill="#5b6092"/><use href="#bS2" y="329.0" fill="#5b6092"/><use href="#bB" y="357.4" fill="#666c9f"/><use href="#bS1" y="394.6" fill="#5b6092"/><use href="#bS2" y="460.8" fill="#5b6092"/><use href="#bB" y="489.2" fill="#666c9f"/></g><g clip-path="url(#cBw)"><rect width="395.8" height="6" fill="#5b6092"/><use href="#bS1" y="-0.8" fill="#5b6092"/><use href="#bS2" y="65.4" fill="#5b6092"/><use href="#wT" y="17.5" stroke="#8a7fae"/><use href="#bW" y="32.4" fill="#6a1850"/><use href="#wT" y="50.7" stroke="#8a7fae"/><use href="#bB" y="93.8" fill="#666c9f"/><use href="#bS1" y="131.0" fill="#5b6092"/><use href="#bS2" y="197.2" fill="#5b6092"/><use href="#wT" y="149.3" stroke="#8a7fae"/><use href="#bW" y="164.2" fill="#6a1850"/><use href="#wT" y="182.5" stroke="#8a7fae"/><use href="#bB" y="225.6" fill="#666c9f"/><use href="#bS1" y="262.8" fill="#5b6092"/><use href="#bS2" y="329.0" fill="#5b6092"/><use href="#wT" y="281.1" stroke="#8a7fae"/><use href="#bW" y="296.0" fill="#6a1850"/><use href="#wT" y="314.3" stroke="#8a7fae"/><use href="#bB" y="357.4" fill="#666c9f"/><use href="#bS1" y="394.6" fill="#5b6092"/><use href="#bS2" y="460.8" fill="#5b6092"/><use href="#wT" y="412.9" stroke="#8a7fae"/><use href="#bW" y="427.8" fill="#6a1850"/><use href="#wT" y="446.1" stroke="#8a7fae"/><use href="#bB" y="489.2" fill="#666c9f"/></g><rect width="395.8" height="397.6" fill="url(#st)"/><rect x="0" y="395.6" width="395.8" height="2" fill="#3a2a48" fill-opacity=".5"/><rect x="394.3" y="0" width="1.5" height="397.6" fill="#3a1038" fill-opacity=".55"/></svg>
</body></html>
